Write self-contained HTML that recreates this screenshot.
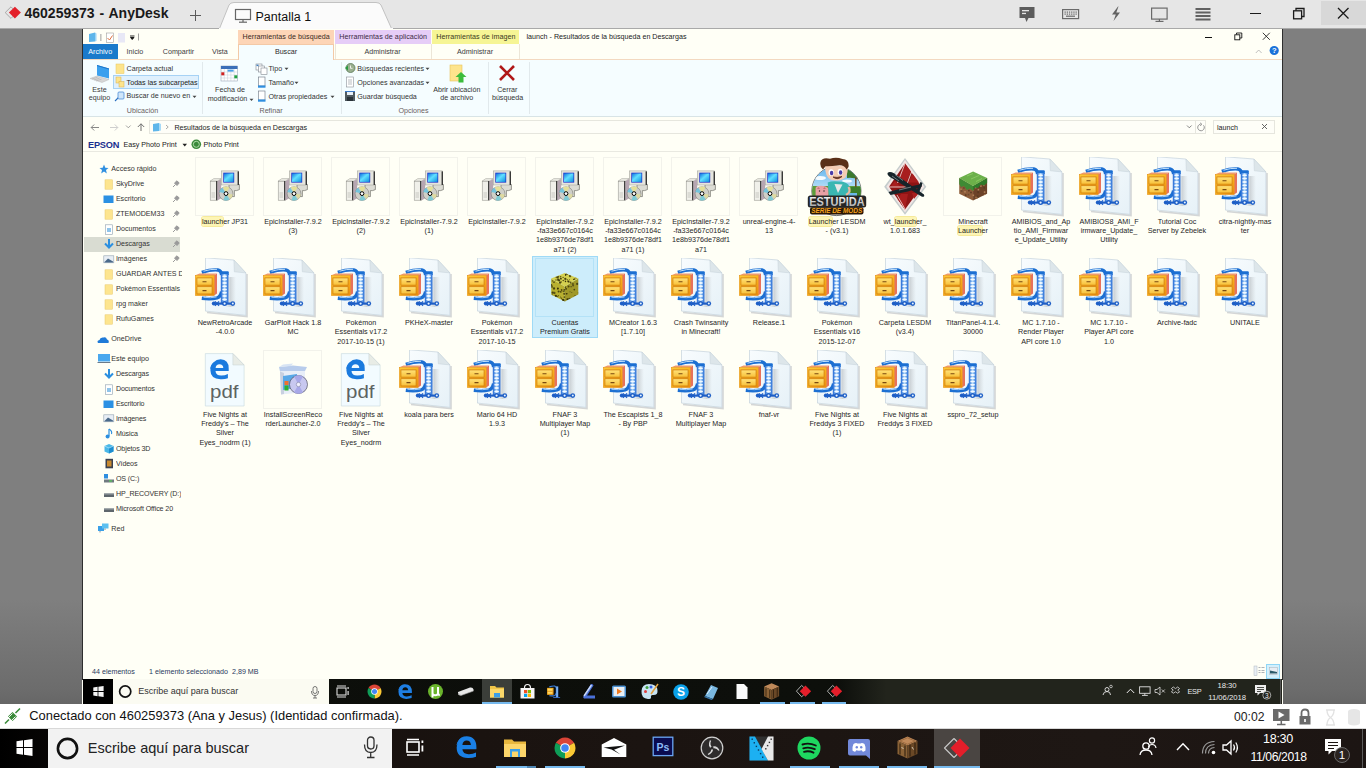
<!DOCTYPE html>
<html><head><meta charset="utf-8"><style>
*{margin:0;padding:0;box-sizing:border-box}
html,body{width:1366px;height:768px;overflow:hidden;background:linear-gradient(180deg,#7f7f7f 0px,#7f7f7f 600px,#6c6c6c 690px,#666 704px);font-family:"Liberation Sans",sans-serif}
.a{position:absolute}
.t{position:absolute;white-space:nowrap;line-height:1}
.r{font-size:7.2px;color:#1e1e1e}
svg{position:absolute;overflow:visible}
</style></head><body>
<div class="a" style="left:0px;top:0px;width:1366px;height:28px;background:#e6e6e6;"></div>
<div class="a" style="left:0px;top:28px;width:1366px;height:1px;background:#a9a9a9;"></div>
<svg style="left:210px;top:0px" width="200" height="29" viewBox="0 0 200 29"><path d="M9.5 28.5 L19 5 Q20.5 2.5 24 2.5 L166 2.5 Q169.5 2.5 171 5 L181.5 28.5" fill="#fbfbfb" stroke="#c2c2c2" stroke-width="1"/><rect x="9" y="28" width="174" height="1" fill="#fbfbfb"/></svg>
<svg style="left:3px;top:4px" width="22" height="22" viewBox="0 0 22 22"><path d="M8 2.8 L2.2 8.6 L8 14.4 M8 2.8 L11 5.8 M8 14.4 L11 11.4" fill="none" stroke="#a0a0a0" stroke-width="0.9"/><path d="M11.9 2.7 L17.9 8.6 L11.9 14.5 L5.9 8.6Z" fill="#e3202a"/></svg>
<div class="t" style="left:24.5px;top:6.35px;font-size:14px;color:#1a1a1a;font-weight:bold;letter-spacing:0px;word-spacing:1px">460259373 - AnyDesk</div>
<div class="a" style="left:190px;top:14.5px;width:11px;height:1.6px;background:#5a5a5a;"></div>
<div class="a" style="left:194.7px;top:10px;width:1.6px;height:11px;background:#5a5a5a;"></div>
<svg style="left:234px;top:8px" width="18" height="16" viewBox="0 0 18 16"><rect x="1.5" y="1.5" width="15" height="10" fill="none" stroke="#666" stroke-width="1.2"/><rect x="8.4" y="11.5" width="1.2" height="2.5" fill="#666"/><rect x="5" y="13.6" width="8" height="1.2" fill="#666"/></svg>
<div class="t" style="left:255.5px;top:10.62px;font-size:12.5px;color:#111;">Pantalla 1</div>
<svg style="left:1018px;top:6px" width="18" height="17" viewBox="0 0 18 17"><path d="M1.5 1 H16.5 V12 H10.5 L8.5 16 L7 12 H1.5 Z" fill="#5c5c5c"/><rect x="4" y="4" width="7" height="1.3" fill="#e6e6e6"/><rect x="4" y="6.8" width="4" height="1.3" fill="#e6e6e6"/></svg>
<svg style="left:1062px;top:9px" width="18" height="11" viewBox="0 0 18 11"><rect x="0.6" y="0.6" width="16" height="9" fill="none" stroke="#6a6a6a" stroke-width="1.2"/><rect x="2.5" y="2.5" width="1.3" height="1.2" fill="#6a6a6a"/><rect x="4.7" y="2.5" width="1.3" height="1.2" fill="#6a6a6a"/><rect x="6.9" y="2.5" width="1.3" height="1.2" fill="#6a6a6a"/><rect x="9.1" y="2.5" width="1.3" height="1.2" fill="#6a6a6a"/><rect x="11.3" y="2.5" width="1.3" height="1.2" fill="#6a6a6a"/><rect x="13.5" y="2.5" width="1.3" height="1.2" fill="#6a6a6a"/><rect x="2.5" y="4.5" width="1.3" height="1.2" fill="#6a6a6a"/><rect x="4.7" y="4.5" width="1.3" height="1.2" fill="#6a6a6a"/><rect x="6.9" y="4.5" width="1.3" height="1.2" fill="#6a6a6a"/><rect x="9.1" y="4.5" width="1.3" height="1.2" fill="#6a6a6a"/><rect x="11.3" y="4.5" width="1.3" height="1.2" fill="#6a6a6a"/><rect x="13.5" y="4.5" width="1.3" height="1.2" fill="#6a6a6a"/><rect x="4" y="6.6" width="9" height="1.2" fill="#6a6a6a"/></svg>
<svg style="left:1110px;top:6px" width="12" height="16" viewBox="0 0 12 16"><path d="M8 0.5 L2 8.5 H5.8 L3.5 15 L10 6.5 H6.3 L8.5 0.5 Z" fill="#636363"/></svg>
<svg style="left:1150px;top:7px" width="19" height="16" viewBox="0 0 19 16"><rect x="1.6" y="1.1" width="15.5" height="11" fill="none" stroke="#6a6a6a" stroke-width="1.2"/><rect x="8.8" y="12" width="1.2" height="2" fill="#6a6a6a"/><rect x="5.5" y="13.8" width="8" height="1.2" fill="#6a6a6a"/></svg>
<svg style="left:1195px;top:7px" width="17" height="15" viewBox="0 0 17 15"><rect x="0.5" y="1.0" width="15" height="2" fill="#616161"/><rect x="0.5" y="4.5" width="15" height="2" fill="#616161"/><rect x="0.5" y="8.0" width="15" height="2" fill="#616161"/><rect x="0.5" y="11.5" width="15" height="2" fill="#616161"/></svg>
<div class="a" style="left:1250px;top:12.5px;width:10.5px;height:1.4px;background:#1a1a1a;"></div>
<svg style="left:1292px;top:7px" width="14" height="13" viewBox="0 0 14 13"><rect x="1.6" y="3.8" width="8" height="8" fill="none" stroke="#1a1a1a" stroke-width="1.3"/><path d="M4 3.5 V1.5 H12 V9.5 H10" fill="none" stroke="#1a1a1a" stroke-width="1.3"/></svg>
<div class="a" style="left:1321px;top:1px;width:45px;height:24px;background:#d8d8d8;"></div>
<svg style="left:1337px;top:7px" width="13" height="13" viewBox="0 0 13 13"><path d="M1 1 L11.5 11.5 M11.5 1 L1 11.5" stroke="#1a1a1a" stroke-width="1.3"/></svg>
<div class="a" style="left:82px;top:29px;width:1201px;height:675px;background:#fffff6;"></div>
<div class="a" style="left:82px;top:29px;width:1px;height:651px;background:#2e2e2e;"></div>
<div class="a" style="left:1282px;top:29px;width:1px;height:651px;background:#2e2e2e;"></div>
<div class="a" style="left:83px;top:29px;width:1199px;height:31px;background:#fffff6;"></div>
<svg style="left:86px;top:31px" width="60" height="13" viewBox="0 0 60 13"><path d="M3 3 L9 1.5 V10.5 L3 11 Z" fill="#5fb6ea"/><path d="M9 1.5 L10.5 2.5 V10 L9 10.5Z" fill="#9bd4f5"/><rect x="14.5" y="3" width="0.8" height="7" fill="#888"/><rect x="20.5" y="2" width="7" height="9.5" fill="#fff" stroke="#a0a0a0" stroke-width="0.6"/><path d="M21.5 7 L23.5 9 L26.5 4.5" fill="none" stroke="#e07040" stroke-width="1"/><rect x="32" y="2" width="7" height="9.5" fill="#e8e8f6"/><path d="M44 5 H48.5 M44.5 6.5 L46.2 8.5 L48 6.5Z" stroke="#111" stroke-width="0.9" fill="#111"/><rect x="52" y="2.5" width="0.8" height="7" fill="#888"/></svg>
<div class="a" style="left:238px;top:30px;width:96px;height:14px;background:#fdd5b7;"></div>
<div class="a" style="left:335px;top:30px;width:96px;height:14px;background:#e6cdf7;"></div>
<div class="a" style="left:432px;top:30px;width:87px;height:14px;background:#f6f595;"></div>
<div class="t" style="left:242.5px;top:33.55px;font-size:7.15px;color:#3a2a22;letter-spacing:0.05px">Herramientas de búsqueda</div>
<div class="t" style="left:339.3px;top:33.55px;font-size:7.15px;color:#3a2a44;letter-spacing:0.05px">Herramientas de aplicación</div>
<div class="t" style="left:436.2px;top:33.55px;font-size:7.15px;color:#3a3a22;letter-spacing:0.05px">Herramientas de imagen</div>
<div class="t" style="left:526.5px;top:33.55px;font-size:7.15px;color:#1a1a1a;">launch - Resultados de la búsqueda en Descargas</div>
<div class="a" style="left:1205px;top:36.5px;width:7px;height:1px;background:#111;"></div>
<svg style="left:1234px;top:32px" width="9" height="9" viewBox="0 0 9 9"><rect x="0.8" y="2.8" width="5" height="5" fill="none" stroke="#111" stroke-width="0.9"/><path d="M2.5 2.5 V1 H7.8 V6 H6" fill="none" stroke="#111" stroke-width="0.9"/></svg>
<svg style="left:1262px;top:32px" width="9" height="9" viewBox="0 0 9 9"><path d="M0.8 0.8 L7.8 7.8 M7.8 0.8 L0.8 7.8" stroke="#222" stroke-width="0.9"/></svg>
<div class="a" style="left:83px;top:44px;width:35px;height:15px;background:#1a7acb;"></div>
<div class="t" style="left:88.3px;top:49.45px;font-size:7.15px;color:#ffffff;">Archivo</div>
<div class="t" style="left:126.6px;top:49.45px;font-size:7.15px;color:#3c3c3c;">Inicio</div>
<div class="t" style="left:162.8px;top:49.45px;font-size:7.15px;color:#3c3c3c;">Compartir</div>
<div class="t" style="left:212px;top:49.45px;font-size:7.15px;color:#3c3c3c;">Vista</div>
<div class="a" style="left:238px;top:44px;width:96px;height:16px;background:#f5fdff;border:1px solid #f3c9a7;border-bottom:none"></div>
<div class="t" style="left:186px;width:200px;text-align:center;top:49.45px;font-size:7.15px;color:#2a2a2a;">Buscar</div>
<div class="a" style="left:334.5px;top:44px;width:1px;height:15px;background:#ece6d8;"></div>
<div class="a" style="left:431px;top:44px;width:1px;height:15px;background:#ece6d8;"></div>
<div class="a" style="left:518.5px;top:44px;width:1px;height:15px;background:#ece6d8;"></div>
<div class="t" style="left:282.5px;width:200px;text-align:center;top:49.45px;font-size:7.15px;color:#3c3c3c;">Administrar</div>
<div class="t" style="left:375px;width:200px;text-align:center;top:49.45px;font-size:7.15px;color:#3c3c3c;">Administrar</div>
<div class="a" style="left:83px;top:59px;width:155px;height:1px;background:#f3d9c0;"></div>
<div class="a" style="left:334px;top:59px;width:948px;height:1px;background:#f3d9c0;"></div>
<svg style="left:1255px;top:49px" width="8" height="5" viewBox="0 0 8 5"><path d="M0.8 4 L3.7 1 L6.6 4" fill="none" stroke="#b0b0b0" stroke-width="0.8"/></svg>
<svg style="left:1269px;top:45px" width="11" height="11" viewBox="0 0 11 11"><circle cx="5.2" cy="5.5" r="4.6" fill="#1a72d9"/><text x="5.2" y="8.4" font-size="7.5" font-weight="bold" text-anchor="middle" fill="#fff" font-family="Liberation Sans">?</text></svg>
<div class="a" style="left:83px;top:60px;width:1199px;height:56px;background:#f5fdff;"></div>
<div class="a" style="left:83px;top:116px;width:1199px;height:1px;background:#d8e4e6;"></div>
<div class="a" style="left:202px;top:62px;width:1px;height:52px;background:#e1e9ec;"></div>
<div class="a" style="left:340.5px;top:62px;width:1px;height:52px;background:#e1e9ec;"></div>
<div class="a" style="left:487.5px;top:62px;width:1px;height:52px;background:#e1e9ec;"></div>
<div class="a" style="left:529px;top:62px;width:1px;height:52px;background:#e1e9ec;"></div>
<svg style="left:88px;top:63px" width="24" height="22" viewBox="0 0 24 22"><path d="M9 2 L21 5.5 V15.5 L9 12.5 Z" fill="#3aa0ee"/><path d="M9 2 L21 5.5 V6.5 L9 3Z" fill="#1d74c8"/><path d="M2 15.5 L9 13 L21 16.5 L14 19.5 Z" fill="#d6d6d6" stroke="#b8b8b8" stroke-width="0.5"/><path d="M4 16 L9.5 14.2 M6 17 L11.5 15.2 M8 18 L13.5 16.2" stroke="#a8a8a8" stroke-width="0.5"/></svg>
<div class="t" style="left:-0.5px;width:200px;text-align:center;top:87.05px;font-size:7.15px;color:#3a3a3a;">Este</div>
<div class="t" style="left:-0.5px;width:200px;text-align:center;top:95.25px;font-size:7.15px;color:#3a3a3a;">equipo</div>
<svg style="left:115px;top:63px" width="10" height="11" viewBox="0 0 10 11"><rect x="1" y="1" width="8" height="9.5" fill="#fde48c" stroke="#e8c560" stroke-width="0.5"/></svg>
<div class="t" style="left:126.6px;top:65.95px;font-size:7.15px;color:#333;">Carpeta actual</div>
<div class="a" style="left:113px;top:75px;width:86px;height:14px;background:#dff0fd;border:1px solid #a6d2f5"></div>
<svg style="left:115px;top:76px" width="10" height="12" viewBox="0 0 10 12"><rect x="1" y="1" width="5" height="6" fill="#fde48c" stroke="#d8b050" stroke-width="0.5"/><rect x="4" y="5.5" width="5" height="5.5" fill="#fde48c" stroke="#d8b050" stroke-width="0.5"/></svg>
<div class="t" style="left:126.6px;top:79.75px;font-size:7.15px;color:#222;">Todas las subcarpetas</div>
<svg style="left:114px;top:91px" width="11" height="11" viewBox="0 0 11 11"><path d="M1 10 L4.5 6.5" stroke="#2b6fc0" stroke-width="1.1"/><rect x="4" y="1" width="6" height="7" rx="1" fill="#cfe6fa" stroke="#3b7fd0" stroke-width="0.7"/></svg>
<div class="t" style="left:126.6px;top:93.45px;font-size:7.15px;color:#333;">Buscar de nuevo en</div>
<svg style="left:192px;top:95px" width="5" height="4" viewBox="0 0 5 4"><path d="M0.5 0.8 H4.5 L2.5 3Z" fill="#444"/></svg>
<div class="t" style="left:42.5px;width:200px;text-align:center;top:107.75px;font-size:7.15px;color:#6a6060;">Ubicación</div>
<svg style="left:220px;top:65px" width="19" height="17" viewBox="0 0 19 17"><rect x="1" y="1" width="16.5" height="15" fill="#fff" stroke="#9aa8b8" stroke-width="0.6"/><rect x="1" y="1" width="16.5" height="3" fill="#3b6fb8"/><path d="M4.3 4 V16" stroke="#b7c3d0" stroke-width="0.4"/><path d="M7.6 4 V16" stroke="#b7c3d0" stroke-width="0.4"/><path d="M10.9 4 V16" stroke="#b7c3d0" stroke-width="0.4"/><path d="M14.2 4 V16" stroke="#b7c3d0" stroke-width="0.4"/><path d="M1 7 H17.5" stroke="#b7c3d0" stroke-width="0.4"/><path d="M1 10 H17.5" stroke="#b7c3d0" stroke-width="0.4"/><path d="M1 13 H17.5" stroke="#b7c3d0" stroke-width="0.4"/><rect x="1.3" y="7.3" width="3" height="3" fill="#d02020"/><rect x="14.3" y="10.3" width="3" height="3" fill="#20a040"/><rect x="7.6" y="4.6" width="6" height="2" fill="#4aa0e8"/></svg>
<div class="t" style="left:130px;width:200px;text-align:center;top:87.35px;font-size:7.15px;color:#333;">Fecha de</div>
<div class="t" style="left:127.5px;width:200px;text-align:center;top:95.55px;font-size:7.15px;color:#333;">modificación</div>
<svg style="left:249px;top:98px" width="5" height="4" viewBox="0 0 5 4"><path d="M0.5 0.8 H4.5 L2.5 3Z" fill="#444"/></svg>
<svg style="left:255px;top:63px" width="13" height="12" viewBox="0 0 13 12"><rect x="1" y="1" width="6" height="6" fill="#fff" stroke="#808890" stroke-width="0.6"/><rect x="3.5" y="3" width="6" height="6" fill="#fff" stroke="#808890" stroke-width="0.6"/><rect x="6" y="5" width="6" height="6.5" fill="#fff" stroke="#808890" stroke-width="0.6"/><rect x="1.5" y="1.6" width="2" height="1.5" fill="#4080c0"/></svg>
<div class="t" style="left:268.5px;top:65.75px;font-size:7.15px;color:#333;">Tipo</div>
<svg style="left:284px;top:67px" width="5" height="4" viewBox="0 0 5 4"><path d="M0.5 0.8 H4.5 L2.5 3Z" fill="#444"/></svg>
<svg style="left:257px;top:76px" width="10" height="13" viewBox="0 0 10 13"><rect x="1.5" y="1" width="6.5" height="9" fill="#fff" stroke="#6a7480" stroke-width="0.6"/><rect x="1" y="9.5" width="7.5" height="2.2" fill="#2f8ee0"/></svg>
<div class="t" style="left:268.5px;top:79.85px;font-size:7.15px;color:#333;">Tamaño</div>
<svg style="left:294px;top:81px" width="5" height="4" viewBox="0 0 5 4"><path d="M0.5 0.8 H4.5 L2.5 3Z" fill="#444"/></svg>
<svg style="left:257px;top:90px" width="10" height="13" viewBox="0 0 10 13"><rect x="1.5" y="1" width="6.5" height="9" fill="#fff" stroke="#6a7480" stroke-width="0.6"/><rect x="1" y="9.5" width="7.5" height="2.2" fill="#2f8ee0"/></svg>
<div class="t" style="left:268.5px;top:93.55px;font-size:7.15px;color:#333;">Otras propiedades</div>
<svg style="left:330px;top:95px" width="5" height="4" viewBox="0 0 5 4"><path d="M0.5 0.8 H4.5 L2.5 3Z" fill="#444"/></svg>
<div class="t" style="left:171px;width:200px;text-align:center;top:107.75px;font-size:7.15px;color:#6a6060;">Refinar</div>
<svg style="left:344px;top:62px" width="12" height="12" viewBox="0 0 12 12"><circle cx="6.5" cy="6" r="4.5" fill="#9ab090" stroke="#5a7a58" stroke-width="0.8"/><path d="M1 6 L4 3.5 V8.5Z" fill="#2a9a40"/><path d="M6.5 3.5 V6.3 H8.5" stroke="#fff" stroke-width="0.8" fill="none"/></svg>
<div class="t" style="left:357.3px;top:65.75px;font-size:7.15px;color:#333;">Búsquedas recientes</div>
<svg style="left:424.5px;top:67px" width="5" height="4" viewBox="0 0 5 4"><path d="M0.5 0.8 H4.5 L2.5 3Z" fill="#444"/></svg>
<svg style="left:345px;top:76px" width="10" height="13" viewBox="0 0 10 13"><rect x="1.5" y="1" width="7" height="10" fill="#fff" stroke="#8a9098" stroke-width="0.6"/><path d="M3 4 H7 M3 6 H7 M3 8 H7" stroke="#8a9098" stroke-width="0.6"/></svg>
<div class="t" style="left:357.3px;top:79.85px;font-size:7.15px;color:#333;">Opciones avanzadas</div>
<svg style="left:424.5px;top:81px" width="5" height="4" viewBox="0 0 5 4"><path d="M0.5 0.8 H4.5 L2.5 3Z" fill="#444"/></svg>
<svg style="left:344px;top:90px" width="12" height="12" viewBox="0 0 12 12"><rect x="1" y="1" width="10" height="10" fill="#505a60"/><rect x="3" y="1" width="6" height="4" fill="#e8f0f8"/><rect x="3" y="7" width="6" height="4" fill="#2a3238"/><rect x="1" y="1" width="10" height="1" fill="#3a78c8"/></svg>
<div class="t" style="left:357.3px;top:93.55px;font-size:7.15px;color:#333;">Guardar búsqueda</div>
<div class="t" style="left:313.5px;width:200px;text-align:center;top:107.75px;font-size:7.15px;color:#6a6060;">Opciones</div>
<svg style="left:448px;top:63px" width="20" height="22" viewBox="0 0 20 22"><rect x="2" y="2" width="12" height="16" fill="#fde48c" stroke="#e7c35c" stroke-width="0.6"/><path d="M13 9 L18.5 14 H15.5 V19.5 H10.5 V14 H7.5 Z" fill="#3cbc3c"/></svg>
<div class="t" style="left:356.8px;width:200px;text-align:center;top:87.05px;font-size:7.15px;color:#333;">Abrir ubicación</div>
<div class="t" style="left:356.8px;width:200px;text-align:center;top:95.25px;font-size:7.15px;color:#333;">de archivo</div>
<svg style="left:498px;top:64px" width="19" height="19" viewBox="0 0 19 19"><path d="M2 2 L16 16 M16 2 L2 16" stroke="#b01818" stroke-width="2.6"/></svg>
<div class="t" style="left:407.3px;width:200px;text-align:center;top:87.05px;font-size:7.15px;color:#333;">Cerrar</div>
<div class="t" style="left:407.6px;width:200px;text-align:center;top:95.25px;font-size:7.15px;color:#333;">búsqueda</div>
<svg style="left:90px;top:122px" width="10" height="10" viewBox="0 0 10 10"><path d="M1.2 5.5 H9 M1.2 5.5 L4.2 2.5 M1.2 5.5 L4.2 8.5" fill="none" stroke="#7a7a7a" stroke-width="0.9"/></svg>
<svg style="left:109px;top:122px" width="10" height="10" viewBox="0 0 10 10"><path d="M1 5.5 H8.8 M8.8 5.5 L5.8 2.5 M8.8 5.5 L5.8 8.5" fill="none" stroke="#cacaca" stroke-width="0.9"/></svg>
<svg style="left:125px;top:124px" width="7" height="6" viewBox="0 0 7 6"><path d="M1 1.5 L3.3 3.8 L5.6 1.5" fill="none" stroke="#8a8a8a" stroke-width="0.8"/></svg>
<svg style="left:136px;top:122px" width="10" height="10" viewBox="0 0 10 10"><path d="M5 1.8 V9 M5 1.8 L1.8 5 M5 1.8 L8.2 5" fill="none" stroke="#707070" stroke-width="1"/></svg>
<div class="a" style="left:149px;top:120px;width:57px;height:14px;background:#fefef8;border:1px solid #e6e6de"></div>
<div class="a" style="left:149px;top:120px;width:1057px;height:14px;background:#fefef8;border:1px solid #e6e6de"></div>
<div class="a" style="left:1194.5px;top:121px;width:1px;height:12px;background:#e6e6de;"></div>
<svg style="left:151px;top:122px" width="12" height="10" viewBox="0 0 12 10"><path d="M2 2 L8 1 V9 L2 9.5Z" fill="#5fb6ea"/><path d="M8 1 L10 2 V8.5 L8 9Z" fill="#a7daf7"/></svg>
<svg style="left:165px;top:124px" width="5" height="6" viewBox="0 0 5 6"><path d="M1 1 L3.2 3 L1 5" fill="none" stroke="#888" stroke-width="0.7"/></svg>
<div class="t" style="left:174.4px;top:124.95px;font-size:7.15px;color:#222;">Resultados de la búsqueda en Descargas</div>
<svg style="left:1186px;top:124px" width="7" height="6" viewBox="0 0 7 6"><path d="M1 1.5 L3.3 3.8 L5.6 1.5" fill="none" stroke="#666" stroke-width="0.8"/></svg>
<svg style="left:1196px;top:122px" width="10" height="10" viewBox="0 0 10 10"><path d="M7.5 3.3 A3.3 3.3 0 1 1 4.5 2.2" fill="none" stroke="#888" stroke-width="0.9"/><path d="M4 0.8 L6 2.3 L4 3.8" fill="none" stroke="#888" stroke-width="0.8"/></svg>
<div class="a" style="left:1213px;top:120px;width:62px;height:14px;background:#fefef8;border:1px solid #e6e6de"></div>
<div class="t" style="left:1217px;top:124.95px;font-size:7.15px;color:#222;">launch</div>
<svg style="left:1261px;top:123px" width="8" height="8" viewBox="0 0 8 8"><path d="M1 1 L6 6 M6 1 L1 6" stroke="#555" stroke-width="0.9"/></svg>
<div class="t" style="left:88px;top:140.81px;font-size:9.2px;color:#1a2f8f;font-weight:bold;letter-spacing:-0.2px">EPSON</div>
<div class="t" style="left:123.5px;top:142.35px;font-size:7.15px;color:#222;">Easy Photo Print</div>
<svg style="left:182px;top:143px" width="6" height="5" viewBox="0 0 6 5"><path d="M0.5 0.8 H5 L2.75 3.5Z" fill="#222"/></svg>
<svg style="left:191px;top:139px" width="11" height="11" viewBox="0 0 11 11"><circle cx="5.3" cy="5.3" r="4.8" fill="#3c8a3c"/><circle cx="5.3" cy="5.3" r="3" fill="none" stroke="#b8e0b0" stroke-width="0.9"/></svg>
<div class="t" style="left:203.5px;top:142.35px;font-size:7.15px;color:#222;">Photo Print</div>
<div class="a" style="left:83px;top:151px;width:1199px;height:1px;background:#e9e9e1;"></div>
<div class="a" style="left:84px;top:237px;width:96px;height:14.5px;background:#d9dcd2;"></div>
<svg style="left:99px;top:164px" width="10" height="10" viewBox="0 0 10 10"><path d="M5 0.5 L6.3 3.7 L9.5 3.9 L7 6 L7.8 9.4 L5 7.5 L2.2 9.4 L3 6 L0.5 3.9 L3.7 3.7Z" fill="#2f8fe0"/></svg>
<div class="t" style="left:111.3px;top:166.35px;font-size:7.15px;color:#333;">Acceso rápido</div>
<svg style="left:104px;top:179.3px" width="10" height="11" viewBox="0 0 10 11"><rect x="1" y="0.8" width="7.5" height="9.4" fill="#fde58f" stroke="#e8c86a" stroke-width="0.5"/></svg>
<div class="t" style="left:115.9px;top:181.49px;font-size:7.1px;color:#333;width:66px;overflow:hidden">SkyDrive</div>
<svg style="left:171.5px;top:180.3px" width="8" height="8" viewBox="0 0 8 8"><path d="M1 7 L3.5 4.5 M2.5 3 L5 0.8 L7.2 3 L5 5.5Z" stroke="#9a9a9a" stroke-width="1" fill="#9a9a9a"/></svg>
<svg style="left:103px;top:195.3px" width="11" height="9" viewBox="0 0 11 9"><rect x="0.5" y="0.5" width="10" height="7.5" fill="#2b90e3"/></svg>
<div class="t" style="left:115.9px;top:196.49px;font-size:7.1px;color:#333;width:66px;overflow:hidden">Escritorio</div>
<svg style="left:171.5px;top:195.3px" width="8" height="8" viewBox="0 0 8 8"><path d="M1 7 L3.5 4.5 M2.5 3 L5 0.8 L7.2 3 L5 5.5Z" stroke="#9a9a9a" stroke-width="1" fill="#9a9a9a"/></svg>
<svg style="left:104px;top:209.3px" width="10" height="11" viewBox="0 0 10 11"><rect x="1" y="0.8" width="7.5" height="9.4" fill="#fde58f" stroke="#e8c86a" stroke-width="0.5"/></svg>
<div class="t" style="left:115.9px;top:211.49px;font-size:7.1px;color:#333;width:66px;overflow:hidden">ZTEMODEM33</div>
<svg style="left:171.5px;top:210.3px" width="8" height="8" viewBox="0 0 8 8"><path d="M1 7 L3.5 4.5 M2.5 3 L5 0.8 L7.2 3 L5 5.5Z" stroke="#9a9a9a" stroke-width="1" fill="#9a9a9a"/></svg>
<svg style="left:104px;top:224.3px" width="10" height="11" viewBox="0 0 10 11"><rect x="1.5" y="0.8" width="7" height="9.5" fill="#fff" stroke="#90a0b0" stroke-width="0.6"/><rect x="3" y="4" width="4" height="4" fill="#8fc4ea"/></svg>
<div class="t" style="left:115.9px;top:226.49px;font-size:7.1px;color:#333;width:66px;overflow:hidden">Documentos</div>
<svg style="left:171.5px;top:225.3px" width="8" height="8" viewBox="0 0 8 8"><path d="M1 7 L3.5 4.5 M2.5 3 L5 0.8 L7.2 3 L5 5.5Z" stroke="#9a9a9a" stroke-width="1" fill="#9a9a9a"/></svg>
<svg style="left:103px;top:238.3px" width="12" height="12" viewBox="0 0 12 12"><path d="M6 1 V8.5 M2 5.5 L6 9.5 L10 5.5" fill="none" stroke="#2b8fe0" stroke-width="2"/></svg>
<div class="t" style="left:115.9px;top:241.49px;font-size:7.1px;color:#333;width:66px;overflow:hidden">Descargas</div>
<svg style="left:171.5px;top:240.3px" width="8" height="8" viewBox="0 0 8 8"><path d="M1 7 L3.5 4.5 M2.5 3 L5 0.8 L7.2 3 L5 5.5Z" stroke="#9a9a9a" stroke-width="1" fill="#9a9a9a"/></svg>
<svg style="left:103px;top:255.3px" width="12" height="9" viewBox="0 0 12 9"><rect x="0.8" y="0.8" width="10" height="7" fill="#e8eef5" stroke="#90a0b0" stroke-width="0.6"/><path d="M1.5 7 L5 3.5 L10 6.5 V7.5 H1.5Z" fill="#4a6a8a"/></svg>
<div class="t" style="left:115.9px;top:256.49px;font-size:7.1px;color:#333;width:66px;overflow:hidden">Imágenes</div>
<svg style="left:171.5px;top:255.3px" width="8" height="8" viewBox="0 0 8 8"><path d="M1 7 L3.5 4.5 M2.5 3 L5 0.8 L7.2 3 L5 5.5Z" stroke="#9a9a9a" stroke-width="1" fill="#9a9a9a"/></svg>
<svg style="left:104px;top:269.3px" width="10" height="11" viewBox="0 0 10 11"><rect x="1" y="0.8" width="7.5" height="9.4" fill="#fde58f" stroke="#e8c86a" stroke-width="0.5"/></svg>
<div class="t" style="left:115.9px;top:271.49px;font-size:7.1px;color:#333;width:66px;overflow:hidden">GUARDAR ANTES D</div>
<svg style="left:104px;top:284.3px" width="10" height="11" viewBox="0 0 10 11"><rect x="1" y="0.8" width="7.5" height="9.4" fill="#fde58f" stroke="#e8c86a" stroke-width="0.5"/></svg>
<div class="t" style="left:115.9px;top:286.49px;font-size:7.1px;color:#333;width:66px;overflow:hidden">Pokémon Essentials</div>
<svg style="left:104px;top:299.3px" width="10" height="11" viewBox="0 0 10 11"><rect x="1" y="0.8" width="7.5" height="9.4" fill="#fde58f" stroke="#e8c86a" stroke-width="0.5"/></svg>
<div class="t" style="left:115.9px;top:301.49px;font-size:7.1px;color:#333;width:66px;overflow:hidden">rpg maker</div>
<svg style="left:104px;top:314.3px" width="10" height="11" viewBox="0 0 10 11"><rect x="1" y="0.8" width="7.5" height="9.4" fill="#fde58f" stroke="#e8c86a" stroke-width="0.5"/></svg>
<div class="t" style="left:115.9px;top:316.49px;font-size:7.1px;color:#333;width:66px;overflow:hidden">RufuGames</div>
<div class="t" style="left:111.3px;top:336.15px;font-size:7.15px;color:#333;">OneDrive</div>
<svg style="left:96px;top:335px" width="14" height="9" viewBox="0 0 14 9"><path d="M2 8 Q0.5 5.5 3.5 5 Q4 2 7.5 2.5 Q10 1.5 11 4.5 Q13.5 5 12.5 8Z" fill="#1f7ad8"/></svg>
<div class="t" style="left:111.3px;top:355.75px;font-size:7.15px;color:#333;">Este equipo</div>
<svg style="left:96.5px;top:353px" width="14" height="11" viewBox="0 0 14 11"><rect x="1" y="1" width="12" height="7.5" fill="#4aa8ee"/><rect x="0.5" y="9" width="13" height="1" fill="#6a7a8a"/></svg>
<svg style="left:103px;top:367.6px" width="12" height="12" viewBox="0 0 12 12"><path d="M6 1 V8.5 M2 5.5 L6 9.5 L10 5.5" fill="none" stroke="#2b8fe0" stroke-width="2"/></svg>
<div class="t" style="left:115.9px;top:370.79px;font-size:7.1px;color:#333;width:65.5px;overflow:hidden;letter-spacing:-0.1px">Descargas</div>
<svg style="left:104px;top:383.55px" width="10" height="11" viewBox="0 0 10 11"><rect x="1.5" y="0.8" width="7" height="9.5" fill="#fff" stroke="#90a0b0" stroke-width="0.6"/><rect x="3" y="4" width="4" height="4" fill="#8fc4ea"/></svg>
<div class="t" style="left:115.9px;top:385.82px;font-size:7.1px;color:#333;width:65.5px;overflow:hidden;letter-spacing:-0.1px">Documentos</div>
<svg style="left:103px;top:399.5px" width="11" height="9" viewBox="0 0 11 9"><rect x="0.5" y="0.5" width="10" height="7.5" fill="#2b90e3"/></svg>
<div class="t" style="left:115.9px;top:400.85px;font-size:7.1px;color:#333;width:65.5px;overflow:hidden;letter-spacing:-0.1px">Escritorio</div>
<svg style="left:103px;top:414.45000000000005px" width="12" height="9" viewBox="0 0 12 9"><rect x="0.8" y="0.8" width="10" height="7" fill="#e8eef5" stroke="#90a0b0" stroke-width="0.6"/><path d="M1.5 7 L5 3.5 L10 6.5 V7.5 H1.5Z" fill="#4a6a8a"/></svg>
<div class="t" style="left:115.9px;top:415.88px;font-size:7.1px;color:#333;width:65.5px;overflow:hidden;letter-spacing:-0.1px">Imágenes</div>
<svg style="left:104px;top:428.40000000000003px" width="10" height="11" viewBox="0 0 10 11"><path d="M5 1 V8" stroke="#2b8fe0" stroke-width="1.2"/><circle cx="3.6" cy="8.5" r="2" fill="#2b8fe0"/><path d="M5 1 Q8.5 3 7.5 6" stroke="#2b8fe0" stroke-width="1.1" fill="none"/></svg>
<div class="t" style="left:115.9px;top:430.91px;font-size:7.1px;color:#333;width:65.5px;overflow:hidden;letter-spacing:-0.1px">Música</div>
<svg style="left:103px;top:443.35px" width="12" height="11" viewBox="0 0 12 11"><path d="M1.5 3 L6 1 L10.5 3 V8.5 L6 10.5 L1.5 8.5Z" fill="#4ab8e8"/><path d="M6 5 V10.5 L10.5 8.5 V3Z" fill="#1f8ed0"/><path d="M1.5 3 L6 5 L10.5 3" fill="none" stroke="#c8ecff" stroke-width="0.6"/></svg>
<div class="t" style="left:115.9px;top:445.94px;font-size:7.1px;color:#333;width:65.5px;overflow:hidden;letter-spacing:-0.1px">Objetos 3D</div>
<svg style="left:104px;top:458.3px" width="10" height="11" viewBox="0 0 10 11"><rect x="1.5" y="0.8" width="7.5" height="9.5" fill="#3a4050"/><rect x="3" y="2.5" width="4.5" height="6" fill="#c88a30"/></svg>
<div class="t" style="left:115.9px;top:460.97px;font-size:7.1px;color:#333;width:65.5px;overflow:hidden;letter-spacing:-0.1px">Vídeos</div>
<svg style="left:103px;top:473.25px" width="12" height="11" viewBox="0 0 12 11"><rect x="1" y="6.5" width="10" height="3" fill="#707a80"/><rect x="1" y="1" width="4" height="4.5" fill="#2f8ee0"/><rect x="6" y="7.5" width="3" height="1" fill="#50e050"/></svg>
<div class="t" style="left:115.9px;top:476.00px;font-size:7.1px;color:#333;width:65.5px;overflow:hidden;letter-spacing:-0.1px">OS (C:)</div>
<svg style="left:103px;top:488.20000000000005px" width="12" height="11" viewBox="0 0 12 11"><rect x="1" y="5.5" width="10" height="3.5" fill="#5e666c"/><rect x="1" y="5.5" width="10" height="1" fill="#9aa2a8"/></svg>
<div class="t" style="left:115.9px;top:491.03px;font-size:7.1px;color:#333;width:65.5px;overflow:hidden;letter-spacing:-0.1px">HP_RECOVERY (D:)</div>
<svg style="left:103px;top:503.15px" width="12" height="11" viewBox="0 0 12 11"><rect x="1" y="5.5" width="10" height="3.5" fill="#5e666c"/><rect x="1" y="5.5" width="10" height="1" fill="#9aa2a8"/></svg>
<div class="t" style="left:115.9px;top:506.06px;font-size:7.1px;color:#333;width:65.5px;overflow:hidden;letter-spacing:-0.1px">Microsoft Office 20</div>
<div class="t" style="left:111.3px;top:525.95px;font-size:7.15px;color:#333;">Red</div>
<svg style="left:97px;top:522px" width="13" height="11" viewBox="0 0 13 11"><rect x="1" y="4" width="6" height="5" fill="#3aa0e8"/><rect x="5" y="1.5" width="6.5" height="5" fill="#5cc0f0"/><path d="M3 9 V10.5 M8 6.5 V8" stroke="#6a7a8a" stroke-width="0.8"/></svg>
<div class="t" style="left:92px;top:669.35px;font-size:7.15px;color:#2a3a60;">44 elementos</div>
<div class="t" style="left:149px;top:669.35px;font-size:7.15px;color:#2a3a60;">1 elemento seleccionado&nbsp; 2,89 MB</div>
<svg style="left:1253px;top:665px" width="13" height="12" viewBox="0 0 13 12"><rect x="1" y="1" width="3" height="9.5" fill="#e8eef4" stroke="#b0b8c0" stroke-width="0.5"/><path d="M5.5 2.5 H7.5 M8.5 2.5 H11.5 M5.5 5.5 H7.5 M8.5 5.5 H11.5 M5.5 7.5 H7.5 M8.5 7.5 H11.5" stroke="#9aa0a8" stroke-width="0.8"/></svg>
<div class="a" style="left:1266px;top:664px;width:14px;height:15px;background:#d4f0fc;border:1px solid #8fd6f6"></div>
<svg style="left:1268.5px;top:667px" width="9" height="8" viewBox="0 0 9 8"><rect x="0.5" y="0.5" width="8" height="7" fill="#e8eef4" stroke="#a8b0b8" stroke-width="0.5"/><path d="M1 6.5 L1 3.5 L8 5 V6.5Z" fill="#2a5a6a"/></svg>
<svg width="0" height="0" style="position:absolute;left:0;top:0"><defs>
<linearGradient id="cabg" x1="0" y1="0" x2="1" y2="1"><stop offset="0" stop-color="#ffc838"/><stop offset="0.5" stop-color="#fcb820"/><stop offset="1" stop-color="#ec8a0c"/></linearGradient>
<linearGradient id="drg" x1="0" y1="0" x2="0" y2="1"><stop offset="0" stop-color="#ffe27a"/><stop offset="1" stop-color="#f8c038"/></linearGradient>
<linearGradient id="springg" x1="0" y1="0" x2="1" y2="0"><stop offset="0" stop-color="#1f66d4"/><stop offset="0.5" stop-color="#a8d4fa"/><stop offset="1" stop-color="#1f66d4"/></linearGradient>
<linearGradient id="scrg" x1="0" y1="0" x2="1" y2="1"><stop offset="0" stop-color="#1070e0"/><stop offset="0.45" stop-color="#60e0ff"/><stop offset="1" stop-color="#1090e0"/></linearGradient>
<linearGradient id="pageg" x1="0" y1="0" x2="1" y2="1"><stop offset="0" stop-color="#f8fcfe"/><stop offset="1" stop-color="#e6f1f7"/></linearGradient>
<linearGradient id="shadg" x1="0" y1="0" x2="1" y2="0"><stop offset="0" stop-color="#d0d6da" stop-opacity="0"/><stop offset="0.5" stop-color="#c8ced2" stop-opacity="0.8"/><stop offset="1" stop-color="#d0d6da" stop-opacity="0"/></linearGradient>
<symbol id="zip" viewBox="0 0 60 60">
<path d="M52 16 V58.5 L12 54.5" fill="none" stroke="#d4d6d6" stroke-width="1.6"/>
<path d="M10.5 -0.2 L38.9 2 L50.9 14.9 V57.4 L10.5 53.1Z" fill="url(#pageg)" stroke="#bccbd6" stroke-width="0.6"/>
<path d="M38.9 2 L39.3 13.8 L50.9 14.9Z" fill="#dde6ea" stroke="#c4d0d8" stroke-width="0.5"/>
<rect x="30" y="19" width="11" height="30" fill="url(#shadg)"/>
<path d="M6.8 14.3 Q16 11.4 22.8 12 Q26.2 12.5 26.6 17" fill="none" stroke="#1c6fd2" stroke-width="3.4"/>
<path d="M8.5 13.2 Q16 10.9 22 11.3" fill="none" stroke="#cfeaff" stroke-width="0.9"/>
<path d="M6.8 40.3 Q16 41.4 22 39.9 Q25.8 38.6 26.6 33.5" fill="none" stroke="#1c6fd2" stroke-width="3.4"/>
<path d="M8.5 39.3 Q16 40.2 21.5 39" fill="none" stroke="#bfe2ff" stroke-width="0.8"/>
<rect x="25.4" y="13.2" width="8.4" height="4" rx="1" fill="#1c6fd2"/>
<rect x="25.8" y="16" width="7.6" height="29.5" fill="url(#springg)"/>
<ellipse cx="29.6" cy="18.3" rx="2.4" ry="1.0" fill="#f4faff"/><ellipse cx="29.6" cy="21.6" rx="2.4" ry="1.0" fill="#f4faff"/><ellipse cx="29.6" cy="24.9" rx="2.4" ry="1.0" fill="#f4faff"/><ellipse cx="29.6" cy="28.2" rx="2.4" ry="1.0" fill="#f4faff"/><ellipse cx="29.6" cy="31.5" rx="2.4" ry="1.0" fill="#f4faff"/><ellipse cx="29.6" cy="34.8" rx="2.4" ry="1.0" fill="#f4faff"/><ellipse cx="29.6" cy="38.1" rx="2.4" ry="1.0" fill="#f4faff"/><ellipse cx="29.6" cy="41.4" rx="2.4" ry="1.0" fill="#f4faff"/>
<path d="M18.2 45.6 H38.6" stroke="#1d5ec6" stroke-width="2.2"/>
<path d="M20 43.4 L24 47.8 M20 47.8 L24 43.4" stroke="#1d5ec6" stroke-width="1.3"/>
<circle cx="18.8" cy="45.6" r="2" fill="#1d5ec6"/><circle cx="29.6" cy="45.6" r="2.5" fill="#1d5ec6"/><circle cx="37.8" cy="45.6" r="2.3" fill="#1d5ec6"/>
<circle cx="29.6" cy="45.6" r="1.1" fill="#e6f3ff"/><circle cx="37.8" cy="45.6" r="1" fill="#e6f3ff"/>
<path d="M4.5 15.4 H22 L19.2 17.3 H0.3Z" fill="#f09a6a"/>
<path d="M19.2 17.3 L22 15.4 V35.6 L19.2 37.6Z" fill="#e8725a"/>
<rect x="0.3" y="17.3" width="18.9" height="20.3" fill="url(#cabg)" stroke="#e08a10" stroke-width="0.5"/>
<rect x="1.9" y="19.9" width="15.2" height="7.3" fill="url(#drg)" stroke="#d07c0c" stroke-width="0.8"/>
<rect x="1.9" y="28.7" width="15.2" height="7.3" fill="url(#drg)" stroke="#d07c0c" stroke-width="0.8"/>
<path d="M7.5 23.8 H11.5 M7.5 32.6 H11.5" stroke="#7a4a10" stroke-width="1.1"/>
</symbol>
<symbol id="inst" viewBox="0 0 60 60">
<path d="M15 24.2 L18.8 21.6 H26.2 L22.4 24.2Z" fill="#ecece4" stroke="#8a8a84" stroke-width="0.4"/>
<rect x="15.2" y="24.2" width="6.2" height="19" fill="#f0f0ea" stroke="#8a8a84" stroke-width="0.5"/>
<path d="M16.5 36 H20 M16.5 38 H20 M16.5 40 H20" stroke="#b0b0a8" stroke-width="0.6"/>
<rect x="21.2" y="24" width="1.3" height="19.4" fill="#222"/>
<path d="M22.5 24.2 L26.2 21.7 V41.2 L22.5 43.4Z" fill="#b6a6b2"/>
<path d="M34 27.5 H44.4 V32.6 L41.6 33.6 H39.4 V39.6 H35.2 V33.2 H34Z" fill="#dcdcd4" stroke="#5a5a54" stroke-width="0.6"/>
<rect x="26.3" y="13.9" width="17.2" height="14.1" fill="#e6e6de" stroke="#9a9a92" stroke-width="0.5"/>
<rect x="42.6" y="14.4" width="1.3" height="13.6" fill="#2a2a2a"/>
<rect x="28.3" y="15.7" width="10.9" height="9.9" fill="#1a2ec8"/>
<rect x="29" y="16.4" width="9.5" height="8.5" fill="url(#scrg)"/>
<circle cx="31" cy="36.6" r="6.9" fill="#cfcfc8" stroke="#6e6e68" stroke-width="0.5"/>
<path d="M31 36.6 L28 30 A6.9 6.9 0 0 1 34.5 30.6Z" fill="#e4e098"/>
<path d="M31 36.6 L24.3 35 A6.9 6.9 0 0 1 27.2 30.8Z" fill="#74c4dc"/>
<path d="M31 36.6 L34.5 42.6 A6.9 6.9 0 0 1 28.5 43Z" fill="#7ccad4"/>
<path d="M31 36.6 L37.8 37.5 A6.9 6.9 0 0 1 35.5 41.8Z" fill="#dedaa0"/>
<circle cx="31" cy="36.6" r="1.9" fill="#fff" stroke="#000" stroke-width="1"/>
</symbol>
<symbol id="pdf" viewBox="0 0 60 60">
<path d="M10.3 3.6 H37.9 L49.1 15 V56 H10.3Z" fill="#f2fbff" stroke="#c6d6de" stroke-width="0.6"/>
<path d="M37.9 3.6 V15 H49.1Z" fill="#e8ece6" stroke="#c6d0d0" stroke-width="0.5"/>
<g transform="translate(15.1 9.3)"><path fill-rule="evenodd" fill="#1a7ade" d="M18.6 11.6 H5.4 Q5.8 16.2 11 16.3 Q14.6 16.4 17.8 14.6 V18.9 Q14.6 20.2 10.4 20 Q0.3 19.6 0.3 11 Q0.3 6.2 3.2 3.2 Q6.4 0 10.6 0 Q18.6 0.2 18.6 9.2Z M5.5 8.6 H13.2 Q13 5 9.4 5 Q5.9 5.2 5.5 8.6Z"/><path d="M0 9.5 Q1.2 3.6 6 2.8 Q3.2 5 2.6 8.6Z" fill="#1a7ade"/></g>
<text x="15.1" y="48.2" font-family="Liberation Sans" font-size="18.5" fill="#5c6362" textLength="28.4" lengthAdjust="spacingAndGlyphs">pdf</text>
</symbol>
</defs></svg>
<svg width="0" height="0" style="position:absolute;left:0;top:0"><defs>
<linearGradient id="skyg" x1="0" y1="0" x2="0" y2="1"><stop offset="0" stop-color="#5ab0ec"/><stop offset="1" stop-color="#b8e0f8"/></linearGradient>
<linearGradient id="estg" x1="0" y1="0" x2="0" y2="1"><stop offset="0" stop-color="#ffffff"/><stop offset="1" stop-color="#9a9a9a"/></linearGradient>
<clipPath id="mcclip"><path d="M16.25 20.9 L30.05 14.4 L44.1 20.9 V36.8 L30.05 43.6 L16.25 36.8Z"/></clipPath><clipPath id="spclip"><path d="M16.2 20.5 L29.7 14.9 L43.3 20.5 V36.5 L29.7 43.6 L16.2 36.5Z"/></clipPath><clipPath id="circ"><circle cx="29.4" cy="34" r="24.4"/></clipPath>
<symbol id="est" viewBox="0 0 60 60">
<circle cx="29.4" cy="34" r="24.6" fill="#f4f4f4" stroke="#333" stroke-width="0.7"/>
<g clip-path="url(#circ)">
<rect x="0" y="8" width="60" height="24" fill="url(#skyg)"/>
<ellipse cx="13" cy="21" rx="6" ry="2" fill="#f4fbff"/><ellipse cx="40" cy="24" rx="5" ry="1.6" fill="#f4fbff"/>
<rect x="0" y="29" width="60" height="14" fill="#5c9c3a"/>
<path d="M40 12 Q52 10 55 19 L52 23 Q46 20 40 21Z" fill="#3c7a2e"/>
<rect x="48" y="20" width="1.6" height="10" fill="#6a4a2a"/>
<rect x="44" y="30" width="14" height="10" fill="#3a7e2c"/>
<rect x="40" y="36" width="10" height="3" fill="#6ab8e8"/>
</g>
<path d="M8.6 31 Q9 28.8 14 28.8 Q19 28.8 21.5 31.5 V39.7 H8.6Z" fill="#e8a0a4"/>
<path d="M10 32 L11.5 30 L13 32Z M16 32 L17.5 30 L19 32Z" fill="#c87078"/>
<circle cx="12.5" cy="34" r="0.7" fill="#222"/><circle cx="17" cy="34" r="0.7" fill="#222"/>
<path d="M20.7 25.5 Q25 23.5 32 24.5 Q41 24.5 42.5 30 L41.5 39.7 H22Z" fill="#3ab6b2"/>
<path d="M27.5 27 L31 36 L35.5 27.5Z" fill="#e8e8e8"/>
<path d="M41.5 30 Q44.5 35 39 38" fill="none" stroke="#eab8a0" stroke-width="2.2"/>
<path d="M18 8.5 Q18 21 24.5 23 Q33.5 24.5 38.5 20.5 Q41.5 15 40.5 9Z" fill="#f4ccb4"/>
<ellipse cx="24.2" cy="15.5" rx="2.6" ry="3.2" fill="#fff"/><ellipse cx="24.6" cy="16" rx="1.7" ry="2.2" fill="#4a3aa8"/>
<ellipse cx="33.2" cy="15" rx="2.6" ry="3.2" fill="#fff"/><ellipse cx="33.6" cy="15.5" rx="1.7" ry="2.2" fill="#4a3aa8"/>
<path d="M26 20 Q30.5 23.5 35 19.5 Q30 21 26 20Z" fill="#5a2a1a" stroke="#5a2a1a" stroke-width="0.8"/>
<path d="M13.5 5 Q15 0 23 1.8 Q29 -0.6 35.5 2 Q42.5 2.5 41.5 10 L39.5 12.5 Q37 7.5 30.5 8.5 Q24.5 9.5 18.5 9.3 L16 12.5 Q12.5 9.5 13.5 5Z" fill="#5a3018"/>
<rect x="0.8" y="38.6" width="58.4" height="12" rx="2.5" fill="#262626"/>
<text x="2.2" y="49" font-family="Liberation Sans" font-weight="bold" font-size="12" fill="url(#estg)" textLength="55.5" lengthAdjust="spacingAndGlyphs">ESTUPIDA</text>
<rect x="3" y="50.2" width="53.5" height="7.2" rx="2" fill="#2a1806"/>
<text x="4.2" y="56.4" font-family="Liberation Sans" font-weight="bold" font-style="italic" font-size="7.2" fill="#f6a41e" textLength="51" lengthAdjust="spacingAndGlyphs">SERIE DE MODS</text>
</symbol>
<symbol id="wt" viewBox="0 0 60 60">
<path d="M30 1 L51.3 29.8 L30 57.7 L9.2 29.8Z" fill="#c4cccc"/>
<path d="M30 3 L49.3 29.8 L30 55.5 L11.3 29.8Z" fill="#f2e6e4"/>
<path d="M30 6.5 L46.5 29.8 L30 52.5 L14 29.8Z" fill="#8e1414"/>
<path d="M30 6.5 L36 14.5 L31 26 H22.5Z M37.5 16.5 L44 25.5 H33.5Z M15.5 29.8 L20 24 L26 30.5Z M26 37 L33 37 L30 52.5 L22.5 42Z M37 36 H44 L39 42Z" fill="#a81e1e"/>
<path d="M30 6.5 L22.5 26 M36.5 15 L32 27 M14 30 H46 M22 38 L30 52" stroke="#f4e6e2" stroke-width="0.8"/>
<path d="M12.5 16 Q14.5 13.8 19 16.2 L49 37.5 Q50 40.2 47 39.8 L17.5 21.5 Q12 18.8 12.5 16Z" fill="#16242a"/>
<path d="M13.5 35 L30 30.5 L47 27 L46.5 29.8 L33 34.5 L15.5 38Z" fill="#16242a"/>
<path d="M40.5 35.5 L45.5 25 L47.5 26 L43.5 37.5Z" fill="#16242a"/>
<path d="M17 19 L24 24 M20 17.5 L28 23.5 M24 33 L36 30" stroke="#c8d0d0" stroke-width="0.5"/>
</symbol>
<symbol id="mc" viewBox="0 0 60 60">
<path d="M16.25 20.9 L30.05 29 V43.6 L16.25 36.8Z" fill="#8c5c3a"/>
<path d="M30.05 29 L44.1 20.9 V36.8 L30.05 43.6Z" fill="#6c4228"/>
<g clip-path="url(#mcclip)"><rect x="41.0" y="37.0" width="1.6" height="1.6" fill="#a07048"/><rect x="33.7" y="40.4" width="1.6" height="1.6" fill="#a07048"/><rect x="21.2" y="34.0" width="1.6" height="1.6" fill="#b08058"/><rect x="40.8" y="34.3" width="1.6" height="1.6" fill="#b08058"/><rect x="32.2" y="39.7" width="1.6" height="1.6" fill="#a07048"/><rect x="24.0" y="29.2" width="1.6" height="1.6" fill="#6a4a30"/><rect x="41.3" y="39.6" width="1.6" height="1.6" fill="#6a4a30"/><rect x="34.5" y="39.7" width="1.6" height="1.6" fill="#6a4a30"/><rect x="40.1" y="30.9" width="1.6" height="1.6" fill="#6a4a30"/><rect x="29.5" y="32.1" width="1.6" height="1.6" fill="#a07048"/><rect x="31.8" y="29.8" width="1.6" height="1.6" fill="#b08058"/><rect x="37.1" y="28.3" width="1.6" height="1.6" fill="#b08058"/><rect x="35.2" y="29.3" width="1.6" height="1.6" fill="#5a3a22"/><rect x="29.5" y="37.5" width="1.6" height="1.6" fill="#b08058"/><rect x="37.4" y="40.1" width="1.6" height="1.6" fill="#5a3a22"/><rect x="29.2" y="29.7" width="1.6" height="1.6" fill="#a07048"/><rect x="33.9" y="38.4" width="1.6" height="1.6" fill="#5a3a22"/><rect x="41.9" y="39.7" width="1.6" height="1.6" fill="#a07048"/><rect x="40.1" y="38.4" width="1.6" height="1.6" fill="#a07048"/><rect x="21.9" y="37.3" width="1.6" height="1.6" fill="#5a3a22"/><rect x="40.4" y="30.1" width="1.6" height="1.6" fill="#5a3a22"/><rect x="25.1" y="32.8" width="1.6" height="1.6" fill="#5a3a22"/><rect x="20.1" y="30.2" width="1.6" height="1.6" fill="#6a4a30"/><rect x="17.9" y="33.2" width="1.6" height="1.6" fill="#6a4a30"/><rect x="17.2" y="31.4" width="1.6" height="1.6" fill="#b08058"/><rect x="26.9" y="27.2" width="1.6" height="1.6" fill="#b08058"/><rect x="27.2" y="34.7" width="1.6" height="1.6" fill="#5a3a22"/><rect x="40.0" y="27.2" width="1.6" height="1.6" fill="#b08058"/><rect x="19.9" y="40.2" width="1.6" height="1.6" fill="#6a4a30"/><rect x="19.5" y="41.1" width="1.6" height="1.6" fill="#6a4a30"/><rect x="34.6" y="31.9" width="1.6" height="1.6" fill="#b08058"/><rect x="24.7" y="36.8" width="1.6" height="1.6" fill="#6a4a30"/><rect x="19.8" y="41.1" width="1.6" height="1.6" fill="#6a4a30"/><rect x="34.5" y="34.6" width="1.6" height="1.6" fill="#5a3a22"/><rect x="34.3" y="34.1" width="1.6" height="1.6" fill="#5a3a22"/></g>
<path d="M16.25 20.9 L30.05 29 V34 L27 31.5 L24 33 L21 29 L18 30 L16.25 27Z" fill="#3f8a34"/>
<path d="M30.05 29 L44.1 20.9 V26 L41 28.5 L38 27.5 L35 31 L32 30.5 L30.05 34Z" fill="#2f7a2a"/>
<path d="M30.05 14.4 L44.1 20.9 L30.05 29 L16.25 20.9Z" fill="#6cb04a"/>
<path d="M24 19 L30 16.5 M28 22 L36 18.5 M33 24.5 L39 21.5" stroke="#88c860" stroke-width="1"/>
</symbol>
<symbol id="sponge" viewBox="0 0 60 60">
<path d="M16.2 20.5 L29.7 28.5 V43.6 L16.2 36.5Z" fill="#b8b030"/>
<path d="M29.7 28.5 L43.3 20.5 V36.5 L29.7 43.6Z" fill="#a09828"/>
<path d="M29.7 14.9 L43.3 20.5 L29.7 28.5 L16.2 20.5Z" fill="#d4d050"/>
<g clip-path="url(#spclip)"><circle cx="22.7" cy="30.8" r="0.76" fill="#5a5418"/><circle cx="29.3" cy="31.8" r="0.92" fill="#4a4410"/><circle cx="23.3" cy="21.8" r="1.20" fill="#4a4410"/><circle cx="31.1" cy="30.9" r="0.78" fill="#3a3408"/><circle cx="22.5" cy="19.4" r="1.15" fill="#4a4410"/><circle cx="36.8" cy="34.5" r="0.54" fill="#5a5418"/><circle cx="17.2" cy="37.6" r="1.08" fill="#4a4410"/><circle cx="29.2" cy="35.8" r="1.12" fill="#5a5418"/><circle cx="38.1" cy="27.4" r="1.01" fill="#5a5418"/><circle cx="28.4" cy="42.1" r="1.12" fill="#3a3408"/><circle cx="17.0" cy="29.4" r="0.68" fill="#5a5418"/><circle cx="28.2" cy="33.2" r="0.71" fill="#5a5418"/><circle cx="39.3" cy="31.6" r="0.87" fill="#4a4410"/><circle cx="32.4" cy="41.2" r="0.98" fill="#3a3408"/><circle cx="40.0" cy="43.7" r="0.97" fill="#3a3408"/><circle cx="35.6" cy="24.5" r="0.88" fill="#5a5418"/><circle cx="31.9" cy="35.7" r="0.65" fill="#5a5418"/><circle cx="23.5" cy="18.6" r="0.84" fill="#5a5418"/><circle cx="43.7" cy="17.6" r="1.06" fill="#4a4410"/><circle cx="41.1" cy="15.6" r="0.80" fill="#4a4410"/><circle cx="40.4" cy="16.3" r="0.93" fill="#3a3408"/><circle cx="26.6" cy="32.0" r="0.89" fill="#4a4410"/><circle cx="30.2" cy="44.0" r="0.72" fill="#3a3408"/><circle cx="19.0" cy="30.5" r="1.16" fill="#4a4410"/><circle cx="24.2" cy="22.6" r="0.98" fill="#4a4410"/><circle cx="24.8" cy="42.8" r="1.13" fill="#4a4410"/><circle cx="26.5" cy="40.2" r="0.77" fill="#5a5418"/><circle cx="35.1" cy="18.0" r="1.18" fill="#5a5418"/><circle cx="23.6" cy="33.4" r="1.00" fill="#4a4410"/><circle cx="28.2" cy="22.5" r="0.71" fill="#4a4410"/><circle cx="16.3" cy="27.0" r="0.91" fill="#3a3408"/><circle cx="26.5" cy="32.1" r="0.59" fill="#5a5418"/><circle cx="33.6" cy="28.5" r="0.98" fill="#4a4410"/><circle cx="33.0" cy="23.1" r="0.84" fill="#5a5418"/><circle cx="17.7" cy="34.6" r="1.17" fill="#4a4410"/><circle cx="33.6" cy="23.7" r="0.92" fill="#3a3408"/><circle cx="26.2" cy="24.1" r="0.76" fill="#5a5418"/><circle cx="23.4" cy="37.8" r="0.57" fill="#3a3408"/><circle cx="43.2" cy="34.8" r="0.59" fill="#5a5418"/><circle cx="22.2" cy="38.3" r="0.67" fill="#3a3408"/><circle cx="35.0" cy="33.8" r="0.57" fill="#5a5418"/><circle cx="25.0" cy="24.7" r="1.08" fill="#4a4410"/><circle cx="38.7" cy="42.9" r="0.56" fill="#5a5418"/><circle cx="34.2" cy="40.7" r="0.82" fill="#3a3408"/><circle cx="38.0" cy="16.0" r="1.17" fill="#4a4410"/><circle cx="38.6" cy="39.3" r="0.63" fill="#4a4410"/><circle cx="25.5" cy="39.0" r="0.56" fill="#5a5418"/><circle cx="25.7" cy="18.8" r="0.70" fill="#4a4410"/><circle cx="29.0" cy="33.4" r="0.70" fill="#5a5418"/><circle cx="27.5" cy="41.7" r="0.61" fill="#3a3408"/><circle cx="29.4" cy="39.1" r="0.94" fill="#5a5418"/><circle cx="28.2" cy="42.6" r="1.15" fill="#3a3408"/><circle cx="16.9" cy="28.2" r="1.03" fill="#5a5418"/><circle cx="30.5" cy="23.4" r="0.74" fill="#3a3408"/><circle cx="40.1" cy="39.9" r="1.18" fill="#3a3408"/><circle cx="38.7" cy="16.3" r="1.13" fill="#5a5418"/><circle cx="30.3" cy="20.8" r="1.12" fill="#4a4410"/><circle cx="32.2" cy="15.4" r="1.02" fill="#3a3408"/><circle cx="30.1" cy="21.9" r="0.51" fill="#5a5418"/><circle cx="27.6" cy="42.2" r="0.93" fill="#4a4410"/><circle cx="19.5" cy="43.2" r="0.88" fill="#3a3408"/><circle cx="25.9" cy="20.7" r="0.87" fill="#3a3408"/><circle cx="20.8" cy="38.0" r="1.15" fill="#3a3408"/><circle cx="39.1" cy="15.2" r="0.94" fill="#4a4410"/><circle cx="17.4" cy="22.9" r="0.69" fill="#5a5418"/><circle cx="30.6" cy="16.5" r="0.73" fill="#3a3408"/><circle cx="40.0" cy="37.5" r="0.53" fill="#3a3408"/><circle cx="17.9" cy="43.3" r="1.10" fill="#3a3408"/><circle cx="30.4" cy="29.2" r="0.61" fill="#3a3408"/><circle cx="25.8" cy="33.8" r="0.91" fill="#4a4410"/><circle cx="23.4" cy="43.7" r="0.80" fill="#3a3408"/><circle cx="31.6" cy="35.8" r="0.77" fill="#3a3408"/><circle cx="31.9" cy="16.2" r="0.82" fill="#5a5418"/><circle cx="37.9" cy="26.0" r="1.06" fill="#5a5418"/><circle cx="40.8" cy="16.5" r="0.94" fill="#5a5418"/><circle cx="24.8" cy="42.6" r="0.79" fill="#3a3408"/><circle cx="22.9" cy="30.5" r="0.99" fill="#3a3408"/><circle cx="38.5" cy="21.5" r="0.59" fill="#3a3408"/><circle cx="42.2" cy="25.9" r="1.13" fill="#4a4410"/><circle cx="19.4" cy="35.0" r="1.16" fill="#5a5418"/><circle cx="34.5" cy="40.7" r="1.05" fill="#5a5418"/><circle cx="19.0" cy="24.2" r="0.87" fill="#5a5418"/><circle cx="36.1" cy="28.7" r="0.67" fill="#4a4410"/><circle cx="17.2" cy="17.7" r="0.57" fill="#4a4410"/><circle cx="21.0" cy="15.7" r="1.09" fill="#3a3408"/><circle cx="19.6" cy="16.7" r="0.64" fill="#5a5418"/><circle cx="34.3" cy="17.7" r="0.55" fill="#5a5418"/><circle cx="21.0" cy="22.0" r="0.68" fill="#5a5418"/><circle cx="30.6" cy="17.4" r="0.68" fill="#5a5418"/><circle cx="21.2" cy="19.3" r="0.68" fill="#5a5418"/><circle cx="38.1" cy="17.1" r="0.44" fill="#5a5418"/><circle cx="41.0" cy="19.9" r="0.63" fill="#5a5418"/><circle cx="34.4" cy="21.7" r="0.53" fill="#5a5418"/><circle cx="32.2" cy="21.6" r="0.68" fill="#5a5418"/><circle cx="40.3" cy="18.3" r="0.52" fill="#5a5418"/><circle cx="39.4" cy="21.1" r="0.88" fill="#5a5418"/><circle cx="28.1" cy="19.4" r="0.69" fill="#5a5418"/></g>
</symbol>
<symbol id="rec" viewBox="0 0 60 60">
<path d="M16 17 L30 15.5 L44 17 L42 21 L17 21.5Z" fill="#b8ccec"/>
<path d="M17 21.5 L42 21 V42 L18 44.5Z" fill="#e8eef8"/>
<path d="M17 21.5 L21 23 V44 L18 44.5Z" fill="#c8d0e0"/>
<path d="M20 26 L34 24 V38 L20 40Z" fill="#58a8e8"/>
<rect x="21.5" y="31" width="4" height="4" fill="#f07030"/><rect x="21.5" y="35.5" width="4" height="5" fill="#30b030"/>
<path d="M16 17 L20 14.5 L30 13.5 L28 16Z" fill="#d8e4f4"/>

<circle cx="35.5" cy="34.5" r="9" fill="#c8c8f0" stroke="#505060" stroke-width="0.7"/>
<path d="M35.5 34.5 L31 26.5 A9 9 0 0 1 40 26.5Z M35.5 34.5 L40 42.5 A9 9 0 0 1 31 42.5Z" fill="#a8a8e8"/>
<circle cx="35.5" cy="34.5" r="2.2" fill="#f0f0ff" stroke="#8080a0" stroke-width="0.6"/>
</symbol>
</defs></svg>
<style>.hl{background:#fdf5b4;border-radius:2px;box-shadow:0 0 0 1px #f6ea9a}.lb{position:absolute;width:70px;text-align:center;font-size:7.2px;line-height:9.3px;color:#1e1e1e;white-space:nowrap}.fr{position:absolute;width:59px;height:59px;border:1px solid #f2f2eb}</style>
<div class="fr" style="left:194.7px;top:157.3px"></div>
<svg style="left:194.7px;top:157.3px" width="60" height="60" viewBox="0 0 60 60"><use href="#inst"/></svg>
<div class="lb" style="left:190.0px;top:216.8px"><span class="hl">launch</span>er JP31</div>
<div class="fr" style="left:262.7px;top:157.3px"></div>
<svg style="left:262.7px;top:157.3px" width="60" height="60" viewBox="0 0 60 60"><use href="#inst"/></svg>
<div class="lb" style="left:258.0px;top:216.8px">EpicInstaller-7.9.2<br>(3)</div>
<div class="fr" style="left:330.7px;top:157.3px"></div>
<svg style="left:330.7px;top:157.3px" width="60" height="60" viewBox="0 0 60 60"><use href="#inst"/></svg>
<div class="lb" style="left:326.0px;top:216.8px">EpicInstaller-7.9.2<br>(2)</div>
<div class="fr" style="left:398.7px;top:157.3px"></div>
<svg style="left:398.7px;top:157.3px" width="60" height="60" viewBox="0 0 60 60"><use href="#inst"/></svg>
<div class="lb" style="left:394.0px;top:216.8px">EpicInstaller-7.9.2<br>(1)</div>
<div class="fr" style="left:466.7px;top:157.3px"></div>
<svg style="left:466.7px;top:157.3px" width="60" height="60" viewBox="0 0 60 60"><use href="#inst"/></svg>
<div class="lb" style="left:462.0px;top:216.8px">EpicInstaller-7.9.2</div>
<div class="fr" style="left:534.7px;top:157.3px"></div>
<svg style="left:534.7px;top:157.3px" width="60" height="60" viewBox="0 0 60 60"><use href="#inst"/></svg>
<div class="lb" style="left:530.0px;top:216.8px">EpicInstaller-7.9.2<br>-fa33e667c0164c<br>1e8b9376de78df1<br>a71 (2)</div>
<div class="fr" style="left:602.7px;top:157.3px"></div>
<svg style="left:602.7px;top:157.3px" width="60" height="60" viewBox="0 0 60 60"><use href="#inst"/></svg>
<div class="lb" style="left:598.0px;top:216.8px">EpicInstaller-7.9.2<br>-fa33e667c0164c<br>1e8b9376de78df1<br>a71 (1)</div>
<div class="fr" style="left:670.7px;top:157.3px"></div>
<svg style="left:670.7px;top:157.3px" width="60" height="60" viewBox="0 0 60 60"><use href="#inst"/></svg>
<div class="lb" style="left:666.0px;top:216.8px">EpicInstaller-7.9.2<br>-fa33e667c0164c<br>1e8b9376de78df1<br>a71</div>
<div class="fr" style="left:738.7px;top:157.3px"></div>
<svg style="left:738.7px;top:157.3px" width="60" height="60" viewBox="0 0 60 60"><use href="#inst"/></svg>
<div class="lb" style="left:734.0px;top:216.8px">unreal-engine-4-<br>13</div>
<svg style="left:806.7px;top:157.3px" width="60" height="60" viewBox="0 0 60 60"><use href="#est"/></svg>
<div class="lb" style="left:802.0px;top:216.8px"><span class="hl">Launch</span>er LESDM<br>- (v3.1)</div>
<svg style="left:874.7px;top:157.3px" width="60" height="60" viewBox="0 0 60 60"><use href="#wt"/></svg>
<div class="lb" style="left:870.0px;top:216.8px">wt_<span class="hl">launch</span>er_<br>1.0.1.683</div>
<div class="fr" style="left:942.7px;top:157.3px"></div>
<svg style="left:942.7px;top:157.3px" width="60" height="60" viewBox="0 0 60 60"><use href="#mc"/></svg>
<div class="lb" style="left:938.0px;top:216.8px">Minecraft<br><span class="hl">Launch</span>er</div>
<svg style="left:1010.7px;top:157.3px" width="60" height="60" viewBox="0 0 60 60"><use href="#zip"/></svg>
<div class="lb" style="left:1006.0px;top:216.8px">AMIBIOS_and_Ap<br>tio_AMI_Firmwar<br>e_Update_Utility</div>
<svg style="left:1078.7px;top:157.3px" width="60" height="60" viewBox="0 0 60 60"><use href="#zip"/></svg>
<div class="lb" style="left:1074.0px;top:216.8px">AMIBIOS8_AMI_F<br>irmware_Update_<br>Utility</div>
<svg style="left:1146.7px;top:157.3px" width="60" height="60" viewBox="0 0 60 60"><use href="#zip"/></svg>
<div class="lb" style="left:1142.0px;top:216.8px">Tutorial Coc<br>Server by Zebelek</div>
<svg style="left:1214.7px;top:157.3px" width="60" height="60" viewBox="0 0 60 60"><use href="#zip"/></svg>
<div class="lb" style="left:1210.0px;top:216.8px">citra-nightly-mas<br>ter</div>
<svg style="left:194.7px;top:258.2px" width="60" height="60" viewBox="0 0 60 60"><use href="#zip"/></svg>
<div class="lb" style="left:190.0px;top:318.0px">NewRetroArcade<br>-4.0.0</div>
<svg style="left:262.7px;top:258.2px" width="60" height="60" viewBox="0 0 60 60"><use href="#zip"/></svg>
<div class="lb" style="left:258.0px;top:318.0px">GarPloit Hack 1.8<br>MC</div>
<svg style="left:330.7px;top:258.2px" width="60" height="60" viewBox="0 0 60 60"><use href="#zip"/></svg>
<div class="lb" style="left:326.0px;top:318.0px">Pokémon<br>Essentials v17.2<br>2017-10-15 (1)</div>
<svg style="left:398.7px;top:258.2px" width="60" height="60" viewBox="0 0 60 60"><use href="#zip"/></svg>
<div class="lb" style="left:394.0px;top:318.0px">PKHeX-master</div>
<svg style="left:466.7px;top:258.2px" width="60" height="60" viewBox="0 0 60 60"><use href="#zip"/></svg>
<div class="lb" style="left:462.0px;top:318.0px">Pokémon<br>Essentials v17.2<br>2017-10-15</div>
<div class="a" style="left:531.7px;top:256.0px;width:66.2px;height:82.2px;background:#cdedfb;border:1px solid #9fdaf6"></div>
<div class="fr" style="left:534.5px;top:258.2px;border-color:#b4e2f7"></div>
<svg style="left:534.7px;top:258.2px" width="60" height="60" viewBox="0 0 60 60"><use href="#sponge"/></svg>
<div class="lb" style="left:530.0px;top:318.0px">Cuentas<br>Premium Gratis</div>
<svg style="left:602.7px;top:258.2px" width="60" height="60" viewBox="0 0 60 60"><use href="#zip"/></svg>
<div class="lb" style="left:598.0px;top:318.0px">MCreator 1.6.3<br>[1.7.10]</div>
<svg style="left:670.7px;top:258.2px" width="60" height="60" viewBox="0 0 60 60"><use href="#zip"/></svg>
<div class="lb" style="left:666.0px;top:318.0px">Crash Twinsanity<br>in Minecraft!</div>
<svg style="left:738.7px;top:258.2px" width="60" height="60" viewBox="0 0 60 60"><use href="#zip"/></svg>
<div class="lb" style="left:734.0px;top:318.0px">Release.1</div>
<svg style="left:806.7px;top:258.2px" width="60" height="60" viewBox="0 0 60 60"><use href="#zip"/></svg>
<div class="lb" style="left:802.0px;top:318.0px">Pokémon<br>Essentials v16<br>2015-12-07</div>
<svg style="left:874.7px;top:258.2px" width="60" height="60" viewBox="0 0 60 60"><use href="#zip"/></svg>
<div class="lb" style="left:870.0px;top:318.0px">Carpeta LESDM<br>(v3.4)</div>
<svg style="left:942.7px;top:258.2px" width="60" height="60" viewBox="0 0 60 60"><use href="#zip"/></svg>
<div class="lb" style="left:938.0px;top:318.0px">TitanPanel-4.1.4.<br>30000</div>
<svg style="left:1010.7px;top:258.2px" width="60" height="60" viewBox="0 0 60 60"><use href="#zip"/></svg>
<div class="lb" style="left:1006.0px;top:318.0px">MC 1.7.10 -<br>Render Player<br>API core 1.0</div>
<svg style="left:1078.7px;top:258.2px" width="60" height="60" viewBox="0 0 60 60"><use href="#zip"/></svg>
<div class="lb" style="left:1074.0px;top:318.0px">MC 1.7.10 -<br>Player API core<br>1.0</div>
<svg style="left:1146.7px;top:258.2px" width="60" height="60" viewBox="0 0 60 60"><use href="#zip"/></svg>
<div class="lb" style="left:1142.0px;top:318.0px">Archive-fadc</div>
<svg style="left:1214.7px;top:258.2px" width="60" height="60" viewBox="0 0 60 60"><use href="#zip"/></svg>
<div class="lb" style="left:1210.0px;top:318.0px">UNITALE</div>
<svg style="left:194.7px;top:349.5px" width="60" height="60" viewBox="0 0 60 60"><use href="#pdf"/></svg>
<div class="lb" style="left:190.0px;top:409.7px">Five Nights at<br>Freddy’s – The<br>Silver<br>Eyes_nodrm (1)</div>
<div class="fr" style="left:262.7px;top:349.5px"></div>
<svg style="left:262.7px;top:349.5px" width="60" height="60" viewBox="0 0 60 60"><use href="#rec"/></svg>
<div class="lb" style="left:258.0px;top:409.7px">InstallScreenReco<br>rderLauncher-2.0</div>
<svg style="left:330.7px;top:349.5px" width="60" height="60" viewBox="0 0 60 60"><use href="#pdf"/></svg>
<div class="lb" style="left:326.0px;top:409.7px">Five Nights at<br>Freddy’s – The<br>Silver<br>Eyes_nodrm</div>
<svg style="left:398.7px;top:349.5px" width="60" height="60" viewBox="0 0 60 60"><use href="#zip"/></svg>
<div class="lb" style="left:394.0px;top:409.7px">koala para bers</div>
<svg style="left:466.7px;top:349.5px" width="60" height="60" viewBox="0 0 60 60"><use href="#zip"/></svg>
<div class="lb" style="left:462.0px;top:409.7px">Mario 64 HD<br>1.9.3</div>
<svg style="left:534.7px;top:349.5px" width="60" height="60" viewBox="0 0 60 60"><use href="#zip"/></svg>
<div class="lb" style="left:530.0px;top:409.7px">FNAF 3<br>Multiplayer Map<br>(1)</div>
<svg style="left:602.7px;top:349.5px" width="60" height="60" viewBox="0 0 60 60"><use href="#zip"/></svg>
<div class="lb" style="left:598.0px;top:409.7px">The Escapists 1_8<br>- By PBP</div>
<svg style="left:670.7px;top:349.5px" width="60" height="60" viewBox="0 0 60 60"><use href="#zip"/></svg>
<div class="lb" style="left:666.0px;top:409.7px">FNAF 3<br>Multiplayer Map</div>
<svg style="left:738.7px;top:349.5px" width="60" height="60" viewBox="0 0 60 60"><use href="#zip"/></svg>
<div class="lb" style="left:734.0px;top:409.7px">fnaf-vr</div>
<svg style="left:806.7px;top:349.5px" width="60" height="60" viewBox="0 0 60 60"><use href="#zip"/></svg>
<div class="lb" style="left:802.0px;top:409.7px">Five Nights at<br>Freddys 3 FIXED<br>(1)</div>
<svg style="left:874.7px;top:349.5px" width="60" height="60" viewBox="0 0 60 60"><use href="#zip"/></svg>
<div class="lb" style="left:870.0px;top:409.7px">Five Nights at<br>Freddys 3 FIXED</div>
<svg style="left:942.7px;top:349.5px" width="60" height="60" viewBox="0 0 60 60"><use href="#zip"/></svg>
<div class="lb" style="left:938.0px;top:409.7px">sspro_72_setup</div>
<div class="a" style="left:83px;top:679px;width:1199px;height:25px;background:linear-gradient(90deg,#0c0e0a 0%,#0d0f0b 63%,#1a1c16 65.5%,#22241c 67%,#22241c 100%);"></div>
<div class="a" style="left:83px;top:679px;width:30px;height:25px;background:#000;"></div>
<svg style="left:92.5px;top:685.5px" width="11" height="11" viewBox="0 0 11 11"><path d="M0.3 1.4 L4.6 0.8 V5.1 H0.3Z M5.4 0.7 L10.6 0 V5.1 H5.4Z M0.3 5.9 H4.6 V10.2 L0.3 9.6Z M5.4 5.9 H10.6 V11 L5.4 10.3Z" fill="#f4f4f4"/></svg>
<div class="a" style="left:113px;top:679px;width:215.5px;height:25px;background:#fbfbf2;"></div>
<svg style="left:118px;top:684px" width="15" height="15" viewBox="0 0 15 15"><circle cx="7.2" cy="7.5" r="5.6" fill="none" stroke="#111" stroke-width="1.7"/></svg>
<div class="t" style="left:138.2px;top:687.18px;font-size:9px;color:#333;">Escribe aquí para buscar</div>
<svg style="left:310px;top:686px" width="10" height="13" viewBox="0 0 10 13"><rect x="3" y="0.5" width="4" height="7" rx="2" fill="none" stroke="#555" stroke-width="0.8"/><path d="M1.5 5 Q1.5 9.5 5 9.5 Q8.5 9.5 8.5 5 M5 9.5 V12 M3 12 H7" fill="none" stroke="#555" stroke-width="0.8"/></svg>
<svg style="left:336px;top:685px" width="14" height="13" viewBox="0 0 14 13"><rect x="1" y="3" width="9" height="7" fill="none" stroke="#ddd" stroke-width="1.1"/><path d="M1 1 H10 M1 12 H10" stroke="#ddd" stroke-width="1.1"/><rect x="11.5" y="2" width="1.2" height="2" fill="#ddd"/><rect x="11.5" y="6" width="1.2" height="4" fill="#ddd"/></svg>
<svg style="left:366px;top:683px" width="17" height="17" viewBox="0 0 17 17"><path d="M8.5 8.5 L14.56 5.00 A7 7 0 0 0 2.44 5.00Z" fill="#db4437"/><path d="M8.5 8.5 L14.56 5.00 A7 7 0 0 1 8.50 15.50Z" fill="#fcc934"/><path d="M8.5 8.5 L8.50 15.50 A7 7 0 0 1 2.44 5.00Z" fill="#0f9d58"/><circle cx="8.5" cy="8.5" r="3.22" fill="#fff"/><circle cx="8.5" cy="8.5" r="2.52" fill="#4285f4"/></svg>
<svg style="left:398px;top:684px" width="16" height="16" viewBox="0 0 16 16"><g transform="scale(0.75)"><path fill-rule="evenodd" fill="#1e7fe4" d="M18.5 12 H5.8 Q6.3 16.4 11.4 16.5 Q15.4 16.6 18.2 15 V18.8 Q15.2 20 10.8 19.9 Q0.6 19.6 0.6 10.4 Q0.8 1.9 8 0.4 Q18.6 -0.6 18.6 10.9Z M5.8 8.2 H13.6 Q13.2 4.2 9.7 4.2 Q6.2 4.3 5.8 8.2Z"/><path d="M0.2 8.9 Q2 0.9 9 0 Q3.6 2 2.4 5.8Z" fill="#1e7fe4"/></g></svg>
<svg style="left:427px;top:683px" width="17" height="17" viewBox="0 0 17 17"><circle cx="8.5" cy="8.5" r="7.5" fill="#6ab42c"/><path d="M5.5 4 V14.5 M5.5 10 Q5.5 12.2 8.2 12.2 Q11 12.2 11 10 V4 M11 10 Q11 12 12.8 12" fill="none" stroke="#fff" stroke-width="2"/></svg>
<svg style="left:457px;top:685px" width="18" height="12" viewBox="0 0 18 12"><path d="M1 7 L13 2.5 Q16 2 16.5 4.5 L16.5 6 L4 10.5 Q1 11 1 8Z" fill="#e8e8e8"/><path d="M1 8 L4 10.5 L16.5 6" fill="none" stroke="#9a9a9a" stroke-width="0.6"/></svg>
<div class="a" style="left:482px;top:679px;width:30px;height:25px;background:#3b3e39;"></div>
<div class="a" style="left:482px;top:702px;width:30px;height:2px;background:#76b9ed;"></div>
<svg style="left:489px;top:684px" width="17" height="15" viewBox="0 0 17 15"><path d="M1 2 H6 L7.5 3.5 H15 V13.5 H1Z" fill="#f0c548"/><rect x="1" y="5" width="14" height="8.5" fill="#fbd86a"/><rect x="5" y="9" width="6" height="4.5" fill="#3a9ee8"/></svg>
<svg style="left:519px;top:683px" width="17" height="17" viewBox="0 0 17 17"><path d="M1.5 5 H15.5 V15.5 H1.5Z" fill="#f4f4f4"/><path d="M5.5 5 Q5.5 1.5 8.5 1.5 Q11.5 1.5 11.5 5" fill="none" stroke="#f4f4f4" stroke-width="1.2"/><rect x="5" y="7" width="3.2" height="3.2" fill="#f25022"/><rect x="8.8" y="7" width="3.2" height="3.2" fill="#7fba00"/><rect x="5" y="10.8" width="3.2" height="3.2" fill="#00a4ef"/><rect x="8.8" y="10.8" width="3.2" height="3.2" fill="#ffb900"/></svg>
<svg style="left:547px;top:682px" width="20" height="20" viewBox="0 0 20 20"><g transform="scale(0.34)"><path d="M6.8 14.3 Q16 11.4 22.8 12 Q26.2 12.5 26.6 17" fill="none" stroke="#3a80e0" stroke-width="3.4"/><path d="M6.8 40.3 Q16 41.4 22 39.9 Q25.8 38.6 26.6 33.5" fill="none" stroke="#3a80e0" stroke-width="3.4"/><rect x="25.8" y="13" width="7.6" height="33" fill="url(#springg)"/><path d="M18.2 45.6 H38.6" stroke="#3a70d0" stroke-width="2.5"/><rect x="0.3" y="17.3" width="18.9" height="20.3" fill="url(#cabg)"/><rect x="1.9" y="19.9" width="15.2" height="7.3" fill="url(#drg)" stroke="#d07c0c" stroke-width="0.8"/><rect x="1.9" y="28.7" width="15.2" height="7.3" fill="url(#drg)" stroke="#d07c0c" stroke-width="0.8"/></g></svg>
<svg style="left:580px;top:682px" width="17" height="19" viewBox="0 0 17 19"><path d="M3 15 L11 2 Q13 1.5 13.5 3.5 L7 13.5 H15 V16.5 H4Z" fill="#4a70d8"/><path d="M4 14 L11.5 3" stroke="#c8d8f8" stroke-width="1.5"/></svg>
<svg style="left:610px;top:683px" width="18" height="17" viewBox="0 0 18 17"><rect x="2" y="2.5" width="14" height="12" rx="1.5" fill="#4a8fd0"/><rect x="3.5" y="4" width="11" height="9" fill="#e8eef4"/><path d="M7 5.5 L12 8.5 L7 11.5Z" fill="#f07a20"/></svg>
<svg style="left:640px;top:682px" width="19" height="18" viewBox="0 0 19 18"><path d="M9 2 Q17 2 17.5 8.5 Q18 13.5 12.5 13 Q10.5 13 11 15.5 Q11 17 8 17 Q1 16.5 1.5 9 Q2 2 9 2Z" fill="#c8e4f4"/><circle cx="5.5" cy="9.5" r="1.5" fill="#e04040"/><circle cx="7" cy="5.5" r="1.5" fill="#40a040"/><circle cx="11" cy="5" r="1.5" fill="#3060e0"/><path d="M11 12 L18 2" stroke="#e0a040" stroke-width="1.5"/></svg>
<svg style="left:672px;top:683px" width="18" height="18" viewBox="0 0 18 18"><circle cx="9" cy="9" r="7.8" fill="#0aa0e8"/><text x="9" y="13.2" font-family="Liberation Sans" font-size="12" font-weight="bold" text-anchor="middle" fill="#fff">S</text></svg>
<svg style="left:702px;top:683px" width="18" height="18" viewBox="0 0 18 18"><path d="M3 13 L9 2 L16 5 L11 16Z" fill="#7ab8e0"/><path d="M3 13 L11 16 L9.5 17 L2 14Z" fill="#3a7ab0"/><path d="M5 11 L10 4" stroke="#e0f0ff" stroke-width="1"/></svg>
<svg style="left:735px;top:683px" width="14" height="17" viewBox="0 0 14 17"><path d="M1.5 1 H9 L12.5 4.5 V16 H1.5Z" fill="#fafafa"/></svg>
<svg style="left:763px;top:682px" width="18" height="19" viewBox="0 0 18 19"><g transform="scale(0.75)"><path d="M1.5 6 L11.5 1.5 L21.5 6 L11.5 10.5Z" fill="#c08a5a"/><path d="M1.5 6 L11.5 10.5 V23.5 L1.5 19Z" fill="#8a6236"/><path d="M11.5 10.5 L21.5 6 V19 L11.5 23.5Z" fill="#6a4826"/><path d="M4 8.5 V19.5 M9 10.5 V21.5 M14 10 V21.5 M19 8 V19.5" stroke="#2a1a0a" stroke-width="1"/></g></svg>
<div class="a" style="left:760.0px;top:702px;width:24.6px;height:2px;background:#76b9ed;"></div>
<div class="a" style="left:790.2px;top:702px;width:24.6px;height:2px;background:#76b9ed;"></div>
<div class="a" style="left:821.5px;top:702px;width:24.6px;height:2px;background:#76b9ed;"></div>
<svg style="left:795px;top:684px" width="18" height="15" viewBox="0 0 18 15"><g transform="scale(0.95)"><path d="M7 1.5 L1.5 7.5 L7 13.5 M7 1.5 L10 4.5 M7 13.5 L10 10.5" fill="none" stroke="#c8c8c8" stroke-width="0.9"/><path d="M11 1.5 L17 7.5 L11 13.5 L5 7.5Z" fill="#e41e2a"/></g></svg>
<svg style="left:826px;top:684px" width="18" height="15" viewBox="0 0 18 15"><g transform="scale(0.95)"><path d="M7 1.5 L1.5 7.5 L7 13.5 M7 1.5 L10 4.5 M7 13.5 L10 10.5" fill="none" stroke="#c8c8c8" stroke-width="0.9"/><path d="M11 1.5 L17 7.5 L11 13.5 L5 7.5Z" fill="#e41e2a"/></g></svg>
<svg style="left:1102px;top:684px" width="12" height="12" viewBox="0 0 12 12"><circle cx="5" cy="5.5" r="2" fill="none" stroke="#e8e8e8" stroke-width="0.9"/><path d="M1 11 Q1.5 7.5 5 7.5 Q8.5 7.5 8.5 11" fill="none" stroke="#e8e8e8" stroke-width="0.9"/><circle cx="9" cy="2.5" r="1.3" fill="none" stroke="#e8e8e8" stroke-width="0.7"/></svg>
<svg style="left:1126px;top:688px" width="9" height="6" viewBox="0 0 9 6"><path d="M0.8 5 L4.5 1.2 L8.2 5" fill="none" stroke="#eee" stroke-width="1"/></svg>
<svg style="left:1139px;top:686px" width="12" height="10" viewBox="0 0 12 10"><rect x="0.6" y="0.8" width="10.5" height="6.5" fill="none" stroke="#e0e0e0" stroke-width="0.9"/><path d="M5.8 7.3 V9.3 M3 9.4 H8.8" stroke="#e0e0e0" stroke-width="0.9"/></svg>
<svg style="left:1154px;top:686px" width="12" height="10" viewBox="0 0 12 10"><path d="M1 3.5 H3 L6 1 V9 L3 6.5 H1Z" fill="none" stroke="#e0e0e0" stroke-width="0.8"/><path d="M7.8 3.5 L10.8 6.5 M10.8 3.5 L7.8 6.5" stroke="#e0e0e0" stroke-width="0.8"/></svg>
<svg style="left:1171px;top:686px" width="9" height="9" viewBox="0 0 9 9"><path d="M2.3 1 L4.5 2.6 L6.7 1 L8.6 2.6 L6.7 4.2 L8.6 5.8 L6.7 7.2 L4.5 5.8 L2.3 7.2 L0.4 5.8 L2.3 4.2 L0.4 2.6Z" fill="none" stroke="#e0e0e0" stroke-width="0.8"/></svg>
<div class="t" style="left:1187.4px;top:688.14px;font-size:7.4px;color:#eaeaea;letter-spacing:-0.2px">ESP</div>
<div class="t" style="left:1127px;width:200px;text-align:center;top:682.28px;font-size:7.7px;color:#eaeaea;">18:30</div>
<div class="t" style="left:1127.2px;width:200px;text-align:center;top:693.58px;font-size:7.7px;color:#eaeaea;">11/06/2018</div>
<svg style="left:1254px;top:684px" width="19" height="17" viewBox="0 0 19 17"><path d="M1 1 H12 V9 H6 L3.5 11.5 V9 H1Z" fill="#eee"/><path d="M3 3.5 H10 M3 5.5 H10 M3 7.5 H7" stroke="#22241d" stroke-width="0.8"/><circle cx="12.8" cy="11.2" r="4" fill="#22241d" stroke="#ddd" stroke-width="0.7"/><text x="12.8" y="13.6" font-family="Liberation Sans" font-size="6.5" text-anchor="middle" fill="#eee">3</text></svg>
<div class="a" style="left:1279.5px;top:679px;width:1px;height:25px;background:#555;"></div>
<div class="a" style="left:0px;top:704px;width:1366px;height:24px;background:#ffffff;"></div>
<div class="a" style="left:0px;top:727.5px;width:1366px;height:1px;background:#d8d8d8;"></div>
<svg style="left:3px;top:707px" width="19" height="18" viewBox="0 0 19 18"><path d="M2 16.5 L6 12.5 M12.5 6 L17 1.5" stroke="#3a8a3a" stroke-width="1.6"/><path d="M5 9.5 L9.5 5 L14 9.5 L9.5 14Z" fill="#3a8a3a"/><path d="M9 9 L11.5 6.5 M6.5 11.5 L4 14" stroke="#fff" stroke-width="0"/><path d="M4.5 11.5 L9.5 6.5 M7.5 14.5 L12.5 9.5" stroke="#ffffff" stroke-width="0.9"/></svg>
<div class="t" style="left:29.3px;top:710.18px;font-size:12.9px;color:#111;">Conectado con 460259373 (Ana y Jesus) (Identidad confirmada).</div>
<div class="t" style="left:1234px;top:710.57px;font-size:12.2px;color:#222;">00:02</div>
<svg style="left:1272px;top:708px" width="20" height="19" viewBox="0 0 20 19"><rect x="1" y="1" width="16.5" height="12" fill="#6a6a6a"/><path d="M6.5 3.5 L12.5 7 L6.5 10.5Z" fill="#fff"/><path d="M9.3 13 V16 M5 16.5 H13.5" stroke="#6a6a6a" stroke-width="1.5"/></svg>
<svg style="left:1298px;top:708px" width="14" height="18" viewBox="0 0 14 18"><path d="M3.5 8 V5 Q3.5 1.5 7 1.5 Q10.5 1.5 10.5 5 V8" fill="none" stroke="#6a6a6a" stroke-width="1.8"/><rect x="1.5" y="8" width="11" height="8.5" fill="#6a6a6a"/><rect x="6.2" y="11" width="1.6" height="3" fill="#fff"/></svg>
<svg style="left:1325px;top:709px" width="11" height="17" viewBox="0 0 11 17"><path d="M1 1 H10 M1 16 H10 M2 1 Q2 6 5.5 8.5 Q9 11 9 16 M9 1 Q9 6 5.5 8.5 Q2 11 2 16" fill="none" stroke="#e2e2e2" stroke-width="1.3"/></svg>
<svg style="left:1347px;top:708px" width="15" height="18" viewBox="0 0 15 18"><ellipse cx="7" cy="3.5" rx="6" ry="2.5" fill="#e6e6e6"/><rect x="1" y="3.5" width="12" height="11.5" fill="#e6e6e6"/><ellipse cx="7" cy="15" rx="6" ry="2.5" fill="#e6e6e6"/></svg>
<div class="a" style="left:0px;top:728.5px;width:1366px;height:39.5px;background:linear-gradient(90deg,#000 0%,#120d0b 10%,#1a1310 35%,#1c1512 60%,#1e1714 80%,#1c1513 100%);"></div>
<svg style="left:16px;top:739px" width="17" height="17" viewBox="0 0 17 17"><path d="M0.5 2.2 L7 1.3 V8 H0.5Z M8 1.2 L16.5 0 V8 H8Z M0.5 9 H7 V15.7 L0.5 14.8Z M8 9 H16.5 V17 L8 15.8Z" fill="#fff"/></svg>
<div class="a" style="left:48px;top:728.5px;width:344px;height:39.5px;background:#f2f2f2;"></div>
<svg style="left:55px;top:736px" width="25" height="25" viewBox="0 0 25 25"><circle cx="12.5" cy="12.5" r="9.6" fill="none" stroke="#111" stroke-width="2.6"/></svg>
<div class="t" style="left:87.8px;top:741.03px;font-size:14.5px;color:#222;">Escribe aquí para buscar</div>
<svg style="left:362px;top:736px" width="18" height="24" viewBox="0 0 18 24"><rect x="5.5" y="1" width="6.5" height="12" rx="3.2" fill="none" stroke="#333" stroke-width="1.3"/><path d="M2.5 8.5 Q2.5 16.5 8.7 16.5 Q15 16.5 15 8.5 M8.7 16.5 V21 M5 21.5 H12.5" fill="none" stroke="#333" stroke-width="1.3"/></svg>
<svg style="left:406px;top:738px" width="20" height="19" viewBox="0 0 20 19"><rect x="1" y="4" width="12" height="10" fill="none" stroke="#fff" stroke-width="1.6"/><path d="M1 1.5 H13 M1 17 H13" stroke="#fff" stroke-width="1.6"/><rect x="15.5" y="2.5" width="1.8" height="2.5" fill="#fff"/><rect x="15.5" y="7.5" width="1.8" height="6" fill="#fff"/></svg>
<svg style="left:456px;top:736px" width="24" height="24" viewBox="0 0 24 24"><g transform="scale(1.1)"><path fill-rule="evenodd" fill="#1a80e6" d="M18.5 12 H5.8 Q6.3 16.4 11.4 16.5 Q15.4 16.6 18.2 15 V18.8 Q15.2 20 10.8 19.9 Q0.6 19.6 0.6 10.4 Q0.8 1.9 8 0.4 Q18.6 -0.6 18.6 10.9Z M5.8 8.2 H13.6 Q13.2 4.2 9.7 4.2 Q6.2 4.3 5.8 8.2Z"/><path d="M0.2 8.9 Q2 0.9 9 0 Q3.6 2 2.4 5.8Z" fill="#1a80e6"/></g></svg>
<svg style="left:503px;top:737px" width="25" height="22" viewBox="0 0 25 22"><path d="M1 2.5 H9 L11 4.5 H23 V20 H1Z" fill="#e8b73e"/><rect x="1" y="7" width="22" height="13" fill="#fcd56a"/><rect x="7" y="12" width="10" height="8" fill="#3a9ee8"/><rect x="9" y="14.5" width="6" height="5.5" fill="#fcd56a"/></svg>
<div class="a" style="left:495.8px;top:766px;width:31px;height:2px;background:#76b9ed;"></div>
<div class="a" style="left:526.8px;top:766px;width:9.2px;height:2px;background:#4f86b3;"></div>
<div class="a" style="left:545px;top:766px;width:40px;height:2px;background:#76b9ed;"></div>
<svg style="left:553px;top:736px" width="24" height="24" viewBox="0 0 24 24"><path d="M12 12 L21.09 6.75 A10.5 10.5 0 0 0 2.91 6.75Z" fill="#db4437"/><path d="M12 12 L21.09 6.75 A10.5 10.5 0 0 1 12.00 22.50Z" fill="#fcc934"/><path d="M12 12 L12.00 22.50 A10.5 10.5 0 0 1 2.91 6.75Z" fill="#0f9d58"/><circle cx="12" cy="12" r="4.83" fill="#fff"/><circle cx="12" cy="12" r="3.78" fill="#4285f4"/></svg>
<svg style="left:601px;top:737px" width="26" height="21" viewBox="0 0 26 21"><path d="M0.7 7.5 L13 1 L25.3 7.5 V20 H0.7Z" fill="#fff"/><path d="M2.5 10.5 L24 8.5 L13 12.8 L19.5 17.5 L10.5 12.5Z" fill="#111"/></svg>
<svg style="left:651.5px;top:736px" width="23" height="21" viewBox="0 0 23 21"><rect x="1.2" y="1.2" width="19.6" height="18.4" fill="#0a0c50" stroke="#6aa6f4" stroke-width="1.3"/><text x="11" y="14.5" font-family="Liberation Sans" font-size="10.5" font-weight="bold" text-anchor="middle" fill="#8cbcf8">Ps</text></svg>
<svg style="left:700px;top:736px" width="24" height="24" viewBox="0 0 24 24"><circle cx="12" cy="12" r="10.8" fill="#2e2c2c" stroke="#d0d0d0" stroke-width="1.2"/><path d="M12 12 Q8.5 9 10.5 4.5 Q8 10.5 12 12Z M12 12 Q12.5 16.5 8 18.5 Q13.5 16 12 12Z M12 12 Q16.5 10.5 19 14.5 Q16 9 12 12Z" fill="#d8d8d8" stroke="#d8d8d8" stroke-width="1.3"/><circle cx="12" cy="12" r="1.6" fill="#2e2c2c"/></svg>
<svg style="left:748.5px;top:735.5px" width="25" height="25" viewBox="0 0 25 25"><rect x="0.5" y="0.5" width="24" height="24" fill="#303030"/><path d="M0.5 0.5 H6 L19 24.5 H0.5Z" fill="#1cb0f2"/><path d="M24.5 0.5 V24.5 H19 L12.5 13 L19 0.5Z" fill="#e8e8e8"/><rect x="2.5" y="2.5" width="1.4" height="1.4" fill="#0a3a60"/><rect x="4.6" y="6.1" width="1.4" height="1.4" fill="#0a3a60"/><rect x="6.7" y="9.7" width="1.4" height="1.4" fill="#0a3a60"/><rect x="8.8" y="13.3" width="1.4" height="1.4" fill="#0a3a60"/><rect x="10.9" y="16.9" width="1.4" height="1.4" fill="#0a3a60"/><rect x="13.0" y="20.5" width="1.4" height="1.4" fill="#0a3a60"/><rect x="21.5" y="2.5" width="1.4" height="1.4" fill="#303030"/><rect x="19.7" y="5.7" width="1.4" height="1.4" fill="#303030"/><rect x="17.9" y="8.9" width="1.4" height="1.4" fill="#303030"/><rect x="16.1" y="12.1" width="1.4" height="1.4" fill="#303030"/></svg>
<svg style="left:797px;top:736px" width="24" height="24" viewBox="0 0 24 24"><circle cx="12" cy="12" r="11.5" fill="#1ed760"/><path d="M5.5 8.5 Q12 6.3 18.8 9.5 M6.3 12.3 Q12 10.5 17.8 13.2 M7 15.8 Q12 14.5 16.5 16.7" fill="none" stroke="#111" stroke-width="1.9" stroke-linecap="round"/></svg>
<div class="a" style="left:790px;top:766px;width:40px;height:2px;background:#76b9ed;"></div>
<div class="a" style="left:839px;top:766px;width:40px;height:2px;background:#76b9ed;"></div>
<div class="a" style="left:887px;top:766px;width:40px;height:2px;background:#76b9ed;"></div>
<svg style="left:847px;top:737px" width="24" height="23" viewBox="0 0 24 23"><path d="M3 2 H21 Q23 2 23 4 V22 L19 18.5 H3 Q1 18.5 1 16.5 V4 Q1 2 3 2Z" fill="#7289da"/><path d="M6.5 7 Q9 5.5 10.5 6.5 H13.5 Q15 5.5 17.5 7 Q19 10 18.5 13.5 Q17 15 15.5 14.5 L14.8 13.3 Q12 14 9.2 13.3 L8.5 14.5 Q7 15 5.5 13.5 Q5 10 6.5 7Z" fill="#fff"/><circle cx="9.8" cy="10.3" r="1.2" fill="#7289da"/><circle cx="14.2" cy="10.3" r="1.2" fill="#7289da"/></svg>
<svg style="left:896px;top:735px" width="24" height="25" viewBox="0 0 24 25"><path d="M1.5 6 L11.5 1.5 L21.5 6 L11.5 10.5Z" fill="#c08a5a"/><path d="M4 6 L11.5 2.8 L19 6 L11.5 9.2Z" fill="none" stroke="#8a5a30" stroke-width="0.6"/><path d="M1.5 6 L11.5 10.5 V23.5 L1.5 19Z" fill="#8a6236"/><path d="M11.5 10.5 L21.5 6 V19 L11.5 23.5Z" fill="#6a4826"/><path d="M4 8.5 V19.5 M9 10.5 V21.5 M14 10 V21.5 M19 8 V19.5" stroke="#2a1a0a" stroke-width="1"/><path d="M5.5 12 L7.5 14 M16 12 L17.5 14.5" stroke="#d8d0c0" stroke-width="0.9"/></svg>
<div class="a" style="left:933.6px;top:728.5px;width:46px;height:39.5px;background:#4a4542;"></div>
<div class="a" style="left:933.6px;top:766px;width:46px;height:2px;background:#76b9ed;"></div>
<svg style="left:940px;top:736px" width="32" height="24" viewBox="0 0 32 24"><path d="M14 2.5 L4.5 12 L14 21.5" fill="none" stroke="#c8c8c8" stroke-width="1.1" stroke-linejoin="round"/><path d="M14 2.5 L20 8.5 M14 21.5 L20 15.5" fill="none" stroke="#c8c8c8" stroke-width="1.1"/><path d="M20 2.5 L29.5 12 L20 21.5 L10.5 12Z" fill="#e41e2a" stroke-linejoin="round"/></svg>
<svg style="left:1138px;top:736px" width="19" height="20" viewBox="0 0 19 20"><circle cx="8" cy="10" r="3.2" fill="none" stroke="#fff" stroke-width="1.3"/><path d="M2 19 Q2.5 14 8 14 Q13.5 14 14 19" fill="none" stroke="#fff" stroke-width="1.3"/><circle cx="14" cy="4.5" r="2.6" fill="none" stroke="#fff" stroke-width="1.2"/><path d="M10.5 11 Q11.5 8.5 14 8.5 Q17.5 8.5 18 12" fill="none" stroke="#fff" stroke-width="1.2"/></svg>
<svg style="left:1176px;top:742px" width="14" height="9" viewBox="0 0 14 9"><path d="M1 8 L7 1.8 L13 8" fill="none" stroke="#fff" stroke-width="1.4"/></svg>
<svg style="left:1201px;top:740px" width="15" height="15" viewBox="0 0 15 15"><path d="M1.5 13.5 Q1.5 2 13.5 1.5 M4.5 13.5 Q4.5 5 13.5 4.5 M7.5 13.5 Q7.5 8 13.5 7.5" fill="none" stroke="#9a9a9a" stroke-width="1.2"/><circle cx="12.5" cy="12.5" r="1.8" fill="#fff"/></svg>
<svg style="left:1222px;top:739px" width="18" height="17" viewBox="0 0 18 17"><path d="M1 6 H4.5 L9 2 V15 L4.5 11 H1Z" fill="none" stroke="#fff" stroke-width="1.3"/><path d="M11.5 5.5 Q13.5 8.5 11.5 11.5 M13.8 3.5 Q17 8.5 13.8 13.5" fill="none" stroke="#fff" stroke-width="1.2"/></svg>
<div class="t" style="left:1178px;width:200px;text-align:center;top:732.83px;font-size:12.6px;color:#fff;letter-spacing:-0.3px">18:30</div>
<div class="t" style="left:1178.5px;width:200px;text-align:center;top:751.17px;font-size:12.2px;color:#fff;letter-spacing:-0.4px">11/06/2018</div>
<svg style="left:1323px;top:737px" width="28" height="28" viewBox="0 0 28 28"><path d="M2 2 H18 V14 H9 L5.5 17.5 V14 H2Z" fill="#fff"/><path d="M5 5.5 H15 M5 8.5 H15 M5 11.5 H11" stroke="#1c1512" stroke-width="1.2"/><circle cx="19" cy="18" r="7.5" fill="#2a2320" stroke="#6a6a6a" stroke-width="1"/><text x="19" y="22.3" font-family="Liberation Sans" font-size="11.5" text-anchor="middle" fill="#fff">1</text></svg>
<div class="a" style="left:1362px;top:729px;width:1px;height:39px;background:#5a5a5a;"></div>
</body></html>
